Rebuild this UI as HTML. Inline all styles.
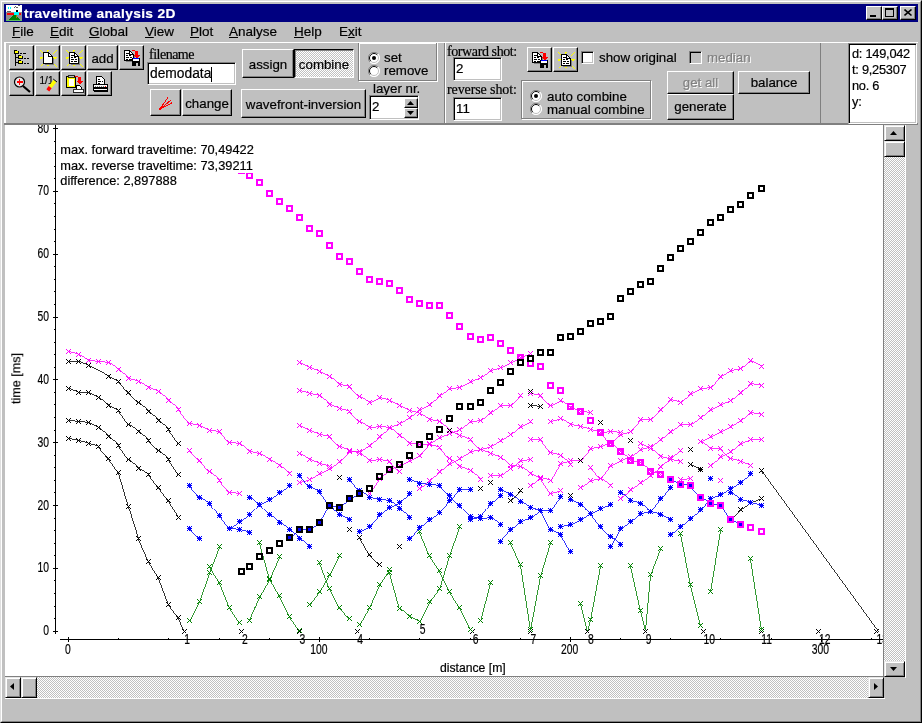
<!DOCTYPE html><html><head><meta charset="utf-8"><title>traveltime analysis 2D</title><style>
html,body{margin:0;padding:0}
body{width:922px;height:723px;overflow:hidden;background:#c0c0c0;position:relative;font-family:"Liberation Sans",sans-serif;font-size:13px;color:#000}
.a{position:absolute;box-sizing:border-box}
.t{position:absolute;white-space:nowrap;line-height:1}
.btn{position:absolute;box-sizing:border-box;background:#c0c0c0;border:1px solid;border-color:#fff #000 #000 #fff;box-shadow:inset -1px -1px 0 #808080}
.sbtn{position:absolute;box-sizing:border-box;background:#c0c0c0;border:1px solid;border-color:#e8e8e8 #000 #000 #e8e8e8;box-shadow:inset 1px 1px 0 #fff,inset -1px -1px 0 #808080}
.btn .t{left:0;right:0;text-align:center}
.sunk{position:absolute;box-sizing:border-box;background:#fff;border:1px solid;border-color:#808080 #fff #fff #808080;box-shadow:inset 1px 1px 0 #000,inset -1px -1px 0 #c0c0c0}
.grp{position:absolute;box-sizing:border-box;border:1px solid #808080;box-shadow:inset 1px 1px 0 #fff, 1px 1px 0 #fff}
.dith{background-image:conic-gradient(#fff 25%,#c0c0c0 0 50%,#fff 0 75%,#c0c0c0 0);background-size:2px 2px}
.ser{font-family:"Liberation Serif",serif}
u{text-decoration:underline}
.t,svg text{will-change:transform}
.t{-webkit-text-stroke:0.2px currentColor}
svg text{stroke:#000;stroke-width:0.2px}
svg{will-change:opacity}
</style></head><body>
<div class="a" style="left:0;top:0;width:922px;height:723px;border:1px solid;border-color:#dfdfdf #000 #000 #dfdfdf"></div>
<div class="a" style="left:1px;top:1px;width:920px;height:721px;border:1px solid;border-color:#fff #808080 #808080 #fff"></div>
<div class="a" style="left:4px;top:4px;width:914px;height:18px;background:#000080"></div>
<svg class="a" style="left:6px;top:5px" width="16" height="16" shape-rendering="crispEdges"><rect width="16" height="16" fill="#fff"/><rect x="0" y="7" width="16" height="9" fill="#909090"/><rect x="2" y="2" width="1" height="2" fill="#00ffff"/><rect x="4" y="2" width="1" height="2" fill="#00ffff"/><path d="M8 3l2-2M10 2l2 1M12 0h2M1 6h4" stroke="#606060" fill="none"/><rect x="10" y="5" width="2" height="2" fill="#000"/><rect x="1" y="8" width="7" height="2" fill="#ff0000"/><rect x="13" y="8" width="2" height="2" fill="#ff0000"/><rect x="8" y="7" width="5" height="3" fill="#00ffff"/><path d="M1.5 15.5L7.5 9.5L10 10L14.5 15.5Z" fill="#008000"/><rect x="10" y="10" width="1" height="3" fill="#a08000"/><rect x="0" y="15" width="16" height="1" fill="#60c060"/></svg>
<div class="t" style="left:24px;top:6.5px;font-size:13.7px;font-weight:bold;color:#fff;letter-spacing:0.36px">traveltime analysis 2D</div>
<div class="btn" style="left:866px;top:6px;width:16px;height:14px"></div>
<div class="btn" style="left:882px;top:6px;width:16px;height:14px"></div>
<div class="btn" style="left:900px;top:6px;width:16px;height:14px"></div>
<div class="a" style="left:870px;top:15px;width:6px;height:2px;background:#000"></div>
<div class="a" style="left:885px;top:8px;width:9px;height:9px;border:1px solid #000;border-top-width:2px"></div>
<svg class="a" style="left:904px;top:9px" width="9" height="9"><path d="M0.5 0.5 L7.5 6.5 M7.5 0.5 L0.5 6.5" stroke="#000" stroke-width="1.6"/></svg>
<div class="t" style="left:12px;top:25px;font-size:13.5px"><u>F</u>ile</div>
<div class="t" style="left:50px;top:25px;font-size:13.5px"><u>E</u>dit</div>
<div class="t" style="left:89px;top:25px;font-size:13.5px"><u>G</u>lobal</div>
<div class="t" style="left:145px;top:25px;font-size:13.5px"><u>V</u>iew</div>
<div class="t" style="left:190px;top:25px;font-size:13.5px"><u>P</u>lot</div>
<div class="t" style="left:229px;top:25px;font-size:13.5px"><u>A</u>nalyse</div>
<div class="t" style="left:294px;top:25px;font-size:13.5px"><u>H</u>elp</div>
<div class="t" style="left:339.4px;top:25px;font-size:13.5px">E<u>x</u>it</div>
<div class="a" style="left:4px;top:42px;width:914px;height:1px;background:#fff"></div>
<div class="a" style="left:4px;top:42px;width:2px;height:81px;background:#fff"></div>
<div class="a" style="left:4px;top:123px;width:914px;height:2px;background:#808080"></div>
<div class="a" style="left:444px;top:43px;width:1px;height:80px;background:#808080"></div><div class="a" style="left:445px;top:43px;width:1px;height:80px;background:#fff"></div>
<div class="a" style="left:820px;top:43px;width:1px;height:80px;background:#808080"></div>
<div class="btn" style="left:9px;top:45px;width:25px;height:25px;"><div class="a" style="left:-1px;top:-1px"><svg class="a" style="left:0;top:0" width="25" height="25" viewBox="0 0 25 25" shape-rendering="crispEdges"><rect x="6" y="9" width="1" height="12" fill="#000"/><rect x="5" y="6" width="5" height="3" fill="#000"/><rect x="5" y="5" width="3" height="1" fill="#000"/><rect x="6" y="6" width="3" height="2" fill="#ffff00"/><rect x="9" y="11" width="5" height="3" fill="#000"/><rect x="9" y="10" width="3" height="1" fill="#000"/><rect x="10" y="11" width="3" height="2" fill="#ffff00"/><rect x="9" y="16" width="5" height="3" fill="#000"/><rect x="9" y="15" width="3" height="1" fill="#000"/><rect x="10" y="16" width="3" height="2" fill="#ffff00"/><rect x="7" y="12" width="2" height="1" fill="#000"/><rect x="7" y="17" width="2" height="1" fill="#000"/><rect x="11" y="8" width="2" height="1" fill="#000"/><rect x="14" y="8" width="3" height="1" fill="#000"/><rect x="15" y="13" width="2" height="1" fill="#000"/><rect x="18" y="13" width="2" height="1" fill="#000"/><rect x="15" y="18" width="2" height="1" fill="#000"/><rect x="18" y="18" width="2" height="1" fill="#000"/></svg></div></div>
<div class="btn" style="left:35px;top:45px;width:25px;height:25px;"><div class="a" style="left:-1px;top:-1px"><svg class="a" style="left:0;top:0" width="25" height="25" viewBox="0 0 25 25" shape-rendering="crispEdges"><rect x="5" y="5" width="1" height="1" fill="#ffff00"/><rect x="6" y="6" width="1" height="1" fill="#ffff00"/><rect x="7" y="7" width="1" height="1" fill="#ffff00"/><rect x="21" y="5" width="1" height="1" fill="#ffff00"/><rect x="20" y="6" width="1" height="1" fill="#ffff00"/><rect x="19" y="7" width="1" height="1" fill="#ffff00"/><rect x="18" y="8" width="1" height="1" fill="#ffff00"/><rect x="18" y="18" width="1" height="1" fill="#ffff00"/><rect x="19" y="19" width="1" height="1" fill="#ffff00"/><rect x="20" y="20" width="1" height="1" fill="#ffff00"/><rect x="21" y="21" width="1" height="1" fill="#ffff00"/><rect x="8" y="18" width="1" height="1" fill="#ffff00"/><rect x="7" y="19" width="1" height="1" fill="#ffff00"/><rect x="6" y="20" width="1" height="1" fill="#ffff00"/><rect x="12" y="5" width="2" height="1" fill="#ffff00"/><rect x="12" y="6" width="1" height="1" fill="#ffff00"/><rect x="18" y="12" width="4" height="1" fill="#ffff00"/><rect x="19" y="13" width="2" height="1" fill="#ffff00"/><rect x="12" y="19" width="1" height="1" fill="#ffff00"/><rect x="12" y="20" width="2" height="1" fill="#ffff00"/><rect x="5" y="12" width="3" height="1" fill="#ffff00"/><rect x="5" y="13" width="2" height="1" fill="#ffff00"/><path d="M8.5 7.5H13.5L17.5 11.5V18.5H8.5Z" fill="#fff" stroke="#000"/><path d="M13.5 7.5V11.5H17.5" fill="none" stroke="#000"/><path d="M18.5 13V19.5H10" fill="none" stroke="#808080"/></svg></div></div>
<div class="btn" style="left:61px;top:45px;width:25px;height:25px;"><div class="a" style="left:-1px;top:-1px"><svg class="a" style="left:0;top:0" width="25" height="25" viewBox="0 0 25 25" shape-rendering="crispEdges"><rect x="5" y="5" width="1" height="1" fill="#ffff00"/><rect x="6" y="6" width="1" height="1" fill="#ffff00"/><rect x="7" y="7" width="1" height="1" fill="#ffff00"/><rect x="21" y="5" width="1" height="1" fill="#ffff00"/><rect x="20" y="6" width="1" height="1" fill="#ffff00"/><rect x="19" y="7" width="1" height="1" fill="#ffff00"/><rect x="18" y="8" width="1" height="1" fill="#ffff00"/><rect x="18" y="18" width="1" height="1" fill="#ffff00"/><rect x="19" y="19" width="1" height="1" fill="#ffff00"/><rect x="20" y="20" width="1" height="1" fill="#ffff00"/><rect x="21" y="21" width="1" height="1" fill="#ffff00"/><rect x="8" y="18" width="1" height="1" fill="#ffff00"/><rect x="7" y="19" width="1" height="1" fill="#ffff00"/><rect x="6" y="20" width="1" height="1" fill="#ffff00"/><rect x="12" y="5" width="2" height="1" fill="#ffff00"/><rect x="12" y="6" width="1" height="1" fill="#ffff00"/><rect x="18" y="12" width="4" height="1" fill="#ffff00"/><rect x="19" y="13" width="2" height="1" fill="#ffff00"/><rect x="12" y="19" width="1" height="1" fill="#ffff00"/><rect x="12" y="20" width="2" height="1" fill="#ffff00"/><rect x="5" y="12" width="3" height="1" fill="#ffff00"/><rect x="5" y="13" width="2" height="1" fill="#ffff00"/><path d="M8.5 7.5H13.5L17.5 11.5V18.5H8.5Z" fill="#fff" stroke="#000"/><path d="M13.5 7.5V11.5H17.5" fill="none" stroke="#000"/><path d="M18.5 13V19.5H10" fill="none" stroke="#808080"/><path d="M10 10.5h3M10 12.5h2M13 12.5h2M10 14.5h3M14 14.5h2M10 16.5h2M13 16.5h3" stroke="#000"/></svg></div></div>
<div class="btn" style="left:87px;top:45px;width:31px;height:25px;"><div class="t" style="left:0;right:0;text-align:center;top:6px;font-size:13.3px;color:#000;">add</div></div>
<div class="btn" style="left:119px;top:45px;width:25px;height:25px;"><div class="a" style="left:-1px;top:-1px"><svg class="a" style="left:0;top:0" width="25" height="25" viewBox="0 0 25 25" shape-rendering="crispEdges"><path d="M5.5 5.5H10.5L14.5 9.5V15.5H5.5Z" fill="#fff" stroke="#000"/><path d="M10.5 5.5V9.5H14.5" fill="none" stroke="#000"/><path d="M15.5 11V16.5H7" fill="none" stroke="#808080"/><path d="M7 8.5h3M7 10.5h2M10 10.5h2M7 12.5h3M11 12.5h2M7 14.5h2M10 14.5h3" stroke="#000"/><path d="M13 5.5h3M16 6.5h2" stroke="#ff0000" stroke-width="1.6"/><rect x="16" y="6" width="3" height="4" fill="#ff0000"/><path d="M14 10h7l-3.5 3.5z" fill="#ff0000"/><rect x="13" y="13" width="8" height="8" fill="#000"/><rect x="14" y="13" width="6" height="1" fill="#0000ff"/><rect x="14" y="14" width="6" height="2" fill="#fff"/><rect x="16" y="18" width="3" height="3" fill="#c0c0c0"/><rect x="16" y="18" width="1" height="3" fill="#000"/></svg></div></div>
<div class="btn" style="left:9px;top:71px;width:25px;height:25px;"><div class="a" style="left:-1px;top:-1px"><svg class="a" style="left:0;top:0" width="25" height="25" viewBox="0 0 25 25" shape-rendering="crispEdges"><path d="M14 15L21 21" stroke="#000" stroke-width="2.2" shape-rendering="auto"/><circle cx="10.5" cy="11" r="5" fill="#e8e8e8" stroke="#000" stroke-width="1.2" shape-rendering="auto"/><path d="M10.5 8v6M7.5 11h6" stroke="#ff0000" stroke-width="1.3"/></svg></div></div>
<div class="btn" style="left:35px;top:71px;width:25px;height:25px;"><div class="a" style="left:-1px;top:-1px"><svg class="a" style="left:0;top:0" width="25" height="25" viewBox="0 0 25 25" shape-rendering="crispEdges"><text x="4.5" y="12.5" font-family="'Liberation Sans', sans-serif" font-size="10.5" fill="#000" textLength="14" lengthAdjust="spacingAndGlyphs">1/1</text><path d="M15.2 16.2L20 9.8" stroke="#ffff00" stroke-width="3.6" shape-rendering="auto"/><path d="M12.8 19.4L15.2 16.2" stroke="#ff0000" stroke-width="3.6" shape-rendering="auto"/><path d="M18.2 8L22 11" stroke="#000" stroke-width="1" shape-rendering="auto"/></svg></div></div>
<div class="btn" style="left:61px;top:71px;width:25px;height:25px;"><div class="a" style="left:-1px;top:-1px"><svg class="a" style="left:0;top:0" width="25" height="25" viewBox="0 0 25 25" shape-rendering="crispEdges"><rect x="5.5" y="5.5" width="9" height="11" fill="#ffff00" stroke="#000"/><rect x="8" y="8" width="5" height="7" fill="#fff"/><rect x="7" y="4" width="6" height="2" fill="#c0c0c0" stroke="#000" stroke-width="0.8"/><path d="M14 5.5h3M17 6.5h2" stroke="#ff0000" stroke-width="1.6"/><rect x="17" y="6" width="3" height="4" fill="#ff0000"/><path d="M15 10h7l-3.5 3.5z" fill="#ff0000"/><path d="M15.5 14.5h3l2 2v3h-5z" fill="#fff" stroke="#000"/><rect x="12" y="18" width="10" height="3" fill="#fff" stroke="#000" stroke-width="0.8"/></svg></div></div>
<div class="btn" style="left:87px;top:71px;width:25px;height:25px;"><div class="a" style="left:-1px;top:-1px"><svg class="a" style="left:0;top:0" width="25" height="25" viewBox="0 0 25 25" shape-rendering="crispEdges"><path d="M9.5 5.5h5l3 3v5h-8z" fill="#fff" stroke="#000"/><path d="M11 8.5h2M11 10.5h3M15 10.5h1M11 12.5h2" stroke="#000"/><rect x="6.5" y="13.5" width="14" height="3" fill="#fff" stroke="#000"/><path d="M8 15.5h1M10 15.5h1M12 15.5h1M14 15.5h1M16 15.5h1" stroke="#808080"/><rect x="18" y="15" width="1" height="1" fill="#f00"/><rect x="6.5" y="17.5" width="14" height="2" fill="#fff" stroke="#000"/><path d="M7 20.5h14" stroke="#000"/></svg></div></div>
<div class="t ser" style="left:149px;top:47.5px;font-size:14px;letter-spacing:-0.5px">filename</div>
<div class="sunk" style="left:147px;top:62px;width:89px;height:23px"><div class="t" style="left:2px;top:4px;font-size:13.8px">demodata</div><div class="a" style="left:63px;top:4px;width:1px;height:15px;background:#000"></div></div>
<div class="btn" style="left:150px;top:89px;width:31px;height:27px;"><div class="a" style="left:-1px;top:-1px"><svg class="a" style="left:0;top:0" width="31" height="27" viewBox="0 0 31 27" shape-rendering="crispEdges"><path d="M9.5 20.5L18 8.5M9.5 20.5L21 11M9.5 20.5L22.5 13.5M9 19l3 1" stroke="#ff0000" stroke-width="1" fill="none"/></svg></div></div>
<div class="btn" style="left:182px;top:89px;width:50px;height:27px;"><div class="t" style="left:0;right:0;text-align:center;top:7px;font-size:13.3px;color:#000;">change</div></div>
<div class="btn" style="left:242px;top:49px;width:52px;height:29px;"><div class="t" style="left:0;right:0;text-align:center;top:8px;font-size:13.3px;color:#000;">assign</div></div>
<div class="a dith" style="left:294px;top:49px;width:60px;height:29px;border:1px solid;border-color:#000 #fff #fff #000;box-shadow:inset 1px 1px 0 #808080;"><div class="t" style="left:0;right:0;text-align:center;top:8px;font-size:13.3px;color:#000;">combine</div></div>
<div class="btn" style="left:241px;top:89px;width:125px;height:29px;"><div class="t" style="left:0;right:0;text-align:center;top:8px;font-size:13.3px;color:#000;">wavefront-inversion</div></div>
<div class="grp" style="left:358px;top:42px;width:79px;height:39px"></div>
<svg class="a" style="left:368px;top:52px" width="12" height="12"><circle cx="6" cy="6" r="5.5" fill="#fff"/><path d="M10 2 A5.5 5.5 0 0 0 2 10" fill="none" stroke="#808080" stroke-width="1"/><path d="M2 10 A5.5 5.5 0 0 0 10 2" fill="none" stroke="#fff" stroke-width="1"/><path d="M9.2 2.8 A4.5 4.5 0 0 0 2.8 9.2" fill="none" stroke="#000" stroke-width="1"/><path d="M2.8 9.2 A4.5 4.5 0 0 0 9.2 2.8" fill="none" stroke="#c0c0c0" stroke-width="1"/><circle cx="6" cy="6" r="2" fill="#000"/></svg>
<svg class="a" style="left:368px;top:65px" width="12" height="12"><circle cx="6" cy="6" r="5.5" fill="#fff"/><path d="M10 2 A5.5 5.5 0 0 0 2 10" fill="none" stroke="#808080" stroke-width="1"/><path d="M2 10 A5.5 5.5 0 0 0 10 2" fill="none" stroke="#fff" stroke-width="1"/><path d="M9.2 2.8 A4.5 4.5 0 0 0 2.8 9.2" fill="none" stroke="#000" stroke-width="1"/><path d="M2.8 9.2 A4.5 4.5 0 0 0 9.2 2.8" fill="none" stroke="#c0c0c0" stroke-width="1"/></svg>
<div class="t" style="left:384px;top:51px;font-size:13.3px">set</div>
<div class="t" style="left:384px;top:64px;font-size:13.3px">remove</div>
<div class="t" style="left:373px;top:82px;font-size:13.3px">layer nr.</div>
<div class="sunk" style="left:369px;top:95px;width:50px;height:25px"><div class="t" style="left:2px;top:4px;font-size:13.3px">2</div></div>
<div class="btn" style="left:404px;top:98px;width:14px;height:10px;"></div>
<div class="btn" style="left:404px;top:108px;width:14px;height:10px;"></div>
<svg class="a" style="left:407px;top:101px" width="7" height="4"><path d="M0 4 L3.5 0 L7 4Z" fill="#000"/></svg>
<svg class="a" style="left:407px;top:111px" width="7" height="4"><path d="M0 0 L3.5 4 L7 0Z" fill="#000"/></svg>
<div class="t ser" style="left:447px;top:44.5px;font-size:14px;letter-spacing:-0.4px">forward shot:</div>
<div class="sunk" style="left:453px;top:57px;width:49px;height:24px"><div class="t" style="left:2px;top:4px;font-size:13.3px">2</div></div>
<div class="t ser" style="left:447px;top:82.5px;font-size:14px;letter-spacing:-0.1px">reverse shot:</div>
<div class="sunk" style="left:453px;top:97px;width:49px;height:24px"><div class="t" style="left:2px;top:4px;font-size:13.3px">11</div></div>
<div class="btn" style="left:527px;top:47px;width:25px;height:25px;"><div class="a" style="left:-1px;top:-1px"><svg class="a" style="left:0;top:0" width="25" height="25" viewBox="0 0 25 25" shape-rendering="crispEdges"><path d="M5.5 5.5H10.5L14.5 9.5V15.5H5.5Z" fill="#fff" stroke="#000"/><path d="M10.5 5.5V9.5H14.5" fill="none" stroke="#000"/><path d="M15.5 11V16.5H7" fill="none" stroke="#808080"/><path d="M7 8.5h3M7 10.5h2M10 10.5h2M7 12.5h3M11 12.5h2M7 14.5h2M10 14.5h3" stroke="#000"/><path d="M13 5.5h3M16 6.5h2" stroke="#ff0000" stroke-width="1.6"/><rect x="16" y="6" width="3" height="4" fill="#ff0000"/><path d="M14 10h7l-3.5 3.5z" fill="#ff0000"/><rect x="13" y="13" width="8" height="8" fill="#000"/><rect x="14" y="13" width="6" height="1" fill="#0000ff"/><rect x="14" y="14" width="6" height="2" fill="#fff"/><rect x="16" y="18" width="3" height="3" fill="#c0c0c0"/><rect x="16" y="18" width="1" height="3" fill="#000"/></svg></div></div>
<div class="btn" style="left:553px;top:47px;width:25px;height:25px;"><div class="a" style="left:-1px;top:-1px"><svg class="a" style="left:0;top:0" width="25" height="25" viewBox="0 0 25 25" shape-rendering="crispEdges"><rect x="5" y="5" width="1" height="1" fill="#ffff00"/><rect x="6" y="6" width="1" height="1" fill="#ffff00"/><rect x="7" y="7" width="1" height="1" fill="#ffff00"/><rect x="21" y="5" width="1" height="1" fill="#ffff00"/><rect x="20" y="6" width="1" height="1" fill="#ffff00"/><rect x="19" y="7" width="1" height="1" fill="#ffff00"/><rect x="18" y="8" width="1" height="1" fill="#ffff00"/><rect x="18" y="18" width="1" height="1" fill="#ffff00"/><rect x="19" y="19" width="1" height="1" fill="#ffff00"/><rect x="20" y="20" width="1" height="1" fill="#ffff00"/><rect x="21" y="21" width="1" height="1" fill="#ffff00"/><rect x="8" y="18" width="1" height="1" fill="#ffff00"/><rect x="7" y="19" width="1" height="1" fill="#ffff00"/><rect x="6" y="20" width="1" height="1" fill="#ffff00"/><rect x="12" y="5" width="2" height="1" fill="#ffff00"/><rect x="12" y="6" width="1" height="1" fill="#ffff00"/><rect x="18" y="12" width="4" height="1" fill="#ffff00"/><rect x="19" y="13" width="2" height="1" fill="#ffff00"/><rect x="12" y="19" width="1" height="1" fill="#ffff00"/><rect x="12" y="20" width="2" height="1" fill="#ffff00"/><rect x="5" y="12" width="3" height="1" fill="#ffff00"/><rect x="5" y="13" width="2" height="1" fill="#ffff00"/><path d="M8.5 7.5H13.5L17.5 11.5V18.5H8.5Z" fill="#fff" stroke="#000"/><path d="M13.5 7.5V11.5H17.5" fill="none" stroke="#000"/><path d="M18.5 13V19.5H10" fill="none" stroke="#808080"/><path d="M10 10.5h3M10 12.5h2M13 12.5h2M10 14.5h3M14 14.5h2M10 16.5h2M13 16.5h3" stroke="#000"/></svg></div></div>
<div class="sunk" style="left:581px;top:51px;width:13px;height:13px"></div>
<div class="t" style="left:599px;top:51px;font-size:13.3px">show original</div>
<div class="sunk" style="left:689px;top:51px;width:13px;height:13px;background:#c0c0c0"></div>
<div class="t" style="left:707px;top:51px;font-size:13.3px;color:#808080;text-shadow:1px 1px 0 #fff">median</div>
<div class="grp" style="left:521px;top:80px;width:130px;height:39px"></div>
<svg class="a" style="left:530px;top:90px" width="12" height="12"><circle cx="6" cy="6" r="5.5" fill="#fff"/><path d="M10 2 A5.5 5.5 0 0 0 2 10" fill="none" stroke="#808080" stroke-width="1"/><path d="M2 10 A5.5 5.5 0 0 0 10 2" fill="none" stroke="#fff" stroke-width="1"/><path d="M9.2 2.8 A4.5 4.5 0 0 0 2.8 9.2" fill="none" stroke="#000" stroke-width="1"/><path d="M2.8 9.2 A4.5 4.5 0 0 0 9.2 2.8" fill="none" stroke="#c0c0c0" stroke-width="1"/><circle cx="6" cy="6" r="2" fill="#000"/></svg>
<svg class="a" style="left:530px;top:103px" width="12" height="12"><circle cx="6" cy="6" r="5.5" fill="#fff"/><path d="M10 2 A5.5 5.5 0 0 0 2 10" fill="none" stroke="#808080" stroke-width="1"/><path d="M2 10 A5.5 5.5 0 0 0 10 2" fill="none" stroke="#fff" stroke-width="1"/><path d="M9.2 2.8 A4.5 4.5 0 0 0 2.8 9.2" fill="none" stroke="#000" stroke-width="1"/><path d="M2.8 9.2 A4.5 4.5 0 0 0 9.2 2.8" fill="none" stroke="#c0c0c0" stroke-width="1"/></svg>
<div class="t" style="left:547px;top:90px;font-size:13.3px">auto combine</div>
<div class="t" style="left:547px;top:103px;font-size:13.3px">manual combine</div>
<div class="btn" style="left:667px;top:71px;width:67px;height:23px;"><div class="t" style="left:0;right:0;text-align:center;top:4px;font-size:13.3px;color:#808080;text-shadow:1px 1px 0 #fff;">get all</div></div>
<div class="btn" style="left:738px;top:71px;width:72px;height:23px;"><div class="t" style="left:0;right:0;text-align:center;top:4px;font-size:13.3px;color:#000;">balance</div></div>
<div class="btn" style="left:667px;top:94px;width:67px;height:26px;"><div class="t" style="left:0;right:0;text-align:center;top:5px;font-size:13.3px;color:#000;">generate</div></div>
<div class="sunk" style="left:848px;top:43px;width:69px;height:81px;border-color:#808080 #fff #fff #808080"><div class="t" style="left:3px;top:2px;font-size:12.8px;letter-spacing:-0.25px;line-height:16px">d: 149,042<br>t: 9,25307<br>no. 6<br>y:</div></div>
<div class="a" style="left:4px;top:42px;width:914px;height:1px;background:#fff"></div>
<div class="a" style="left:5px;top:125px;width:879px;height:552px;background:#808080"></div><div class="a" style="left:5px;top:125px;width:878px;height:551px;background:#fff"></div>
<div class="a dith" style="left:884px;top:125px;width:21px;height:552px"></div>
<div class="sbtn" style="left:884px;top:125px;width:21px;height:16px"></div>
<div class="sbtn" style="left:884px;top:141px;width:21px;height:16px"></div>
<div class="sbtn" style="left:884px;top:661px;width:21px;height:16px"></div>
<svg class="a" style="left:890px;top:131px" width="7" height="4"><path d="M0 4 L3.5 0 L7 4Z" fill="#000"/></svg>
<svg class="a" style="left:890px;top:667px" width="7" height="4"><path d="M0 0 L3.5 4 L7 0Z" fill="#000"/></svg>
<div class="a dith" style="left:5px;top:677px;width:879px;height:21px"></div>
<div class="sbtn" style="left:5px;top:677px;width:16px;height:21px"></div>
<div class="sbtn" style="left:21px;top:677px;width:16px;height:21px"></div>
<div class="sbtn" style="left:868px;top:677px;width:16px;height:21px"></div>
<svg class="a" style="left:10px;top:683px" width="4" height="7"><path d="M4 0 L0 3.5 L4 7Z" fill="#000"/></svg>
<svg class="a" style="left:874px;top:683px" width="4" height="7"><path d="M0 0 L4 3.5 L0 7Z" fill="#000"/></svg>
<div class="a" style="left:905px;top:125px;width:1px;height:553px;background:#fff"></div><div class="a" style="left:5px;top:698px;width:880px;height:1px;background:#fff"></div>
<svg class="a" style="left:0;top:0" width="922" height="723" viewBox="0 0 922 723"><defs><clipPath id="cc"><rect x="5" y="125" width="878" height="551"/></clipPath></defs>
<g clip-path="url(#cc)" shape-rendering="crispEdges" stroke-width="1" fill="none">
<path d="M182 629L187 634M182 634L187 629" stroke="#000"/>
<path d="M239 629L244 634M239 634L244 629" stroke="#000"/>
<path d="M297 629L302 634M297 634L302 629" stroke="#000"/>
<path d="M355 629L360 634M355 634L360 629" stroke="#000"/>
<path d="M470 629L475 634M470 634L475 629" stroke="#000"/>
<path d="M528 629L533 634M528 634L533 629" stroke="#000"/>
<path d="M585 629L590 634M585 634L590 629" stroke="#000"/>
<path d="M643 629L648 634M643 634L648 629" stroke="#000"/>
<path d="M701 629L706 634M701 634L706 629" stroke="#000"/>
<path d="M759 629L764 634M759 634L764 629" stroke="#000"/>
<path d="M816 629L821 634M816 634L821 629" stroke="#000"/>
<path d="M874 629L879 634M874 634L879 629" stroke="#000"/>
<polyline points="189.5,620.5 199.5,601.5 209.5,572.5 219.5,546.5" fill="none" stroke="#008000" stroke-width="0.8"/>
<path d="M187 618L192 623M187 623L192 618" stroke="#008000"/>
<path d="M197 599L202 604M197 604L202 599" stroke="#008000"/>
<path d="M207 570L212 575M207 575L212 570" stroke="#008000"/>
<path d="M217 544L222 549M217 549L222 544" stroke="#008000"/>
<polyline points="209.5,566.5 219.5,582.5 229.5,607.5 239.5,622.5" fill="none" stroke="#008000" stroke-width="0.8"/>
<path d="M207 564L212 569M207 569L212 564" stroke="#008000"/>
<path d="M217 580L222 585M217 585L222 580" stroke="#008000"/>
<path d="M227 605L232 610M227 610L232 605" stroke="#008000"/>
<path d="M237 620L242 625M237 625L242 620" stroke="#008000"/>
<polyline points="249.5,620.5 259.5,596.5 269.5,579.5 279.5,556.5" fill="none" stroke="#008000" stroke-width="0.8"/>
<path d="M247 618L252 623M247 623L252 618" stroke="#008000"/>
<path d="M257 594L262 599M257 599L262 594" stroke="#008000"/>
<path d="M267 577L272 582M267 582L272 577" stroke="#008000"/>
<path d="M277 554L282 559M277 559L282 554" stroke="#008000"/>
<polyline points="259.5,542.5 269.5,578.5 279.5,595.5 289.5,616.5 299.5,630.5" fill="none" stroke="#008000" stroke-width="0.8"/>
<path d="M257 540L262 545M257 545L262 540" stroke="#008000"/>
<path d="M267 576L272 581M267 581L272 576" stroke="#008000"/>
<path d="M277 593L282 598M277 598L282 593" stroke="#008000"/>
<path d="M287 614L292 619M287 619L292 614" stroke="#008000"/>
<path d="M297 628L302 633M297 633L302 628" stroke="#008000"/>
<polyline points="309.5,604.5 319.5,591.5 329.5,574.5 339.5,555.5" fill="none" stroke="#008000" stroke-width="0.8"/>
<path d="M307 602L312 607M307 607L312 602" stroke="#008000"/>
<path d="M317 589L322 594M317 594L322 589" stroke="#008000"/>
<path d="M327 572L332 577M327 577L332 572" stroke="#008000"/>
<path d="M337 553L342 558M337 558L342 553" stroke="#008000"/>
<polyline points="319.5,562.5 329.5,588.5 339.5,607.5 349.5,618.5" fill="none" stroke="#008000" stroke-width="0.8"/>
<path d="M317 560L322 565M317 565L322 560" stroke="#008000"/>
<path d="M327 586L332 591M327 591L332 586" stroke="#008000"/>
<path d="M337 605L342 610M337 610L342 605" stroke="#008000"/>
<path d="M347 616L352 621M347 621L352 616" stroke="#008000"/>
<polyline points="359.5,624.5 369.5,607.5 379.5,584.5 389.5,569.5" fill="none" stroke="#008000" stroke-width="0.8"/>
<path d="M357 622L362 627M357 627L362 622" stroke="#008000"/>
<path d="M367 605L372 610M367 610L372 605" stroke="#008000"/>
<path d="M377 582L382 587M377 587L382 582" stroke="#008000"/>
<path d="M387 567L392 572M387 572L392 567" stroke="#008000"/>
<polyline points="389.5,572.5 399.5,608.5 409.5,616.5 419.5,621.5" fill="none" stroke="#008000" stroke-width="0.8"/>
<path d="M387 570L392 575M387 575L392 570" stroke="#008000"/>
<path d="M397 606L402 611M397 611L402 606" stroke="#008000"/>
<path d="M407 614L412 619M407 619L412 614" stroke="#008000"/>
<path d="M417 619L422 624M417 624L422 619" stroke="#008000"/>
<polyline points="419.5,621.5 429.5,601.5 439.5,588.5 449.5,555.5 459.5,526.5" fill="none" stroke="#008000" stroke-width="0.8"/>
<path d="M417 619L422 624M417 624L422 619" stroke="#008000"/>
<path d="M427 599L432 604M427 604L432 599" stroke="#008000"/>
<path d="M437 586L442 591M437 591L442 586" stroke="#008000"/>
<path d="M447 553L452 558M447 558L452 553" stroke="#008000"/>
<path d="M457 524L462 529M457 529L462 524" stroke="#008000"/>
<polyline points="419.5,531.5 429.5,555.5 439.5,570.5 449.5,591.5 459.5,607.5 470.5,629.5" fill="none" stroke="#008000" stroke-width="0.8"/>
<path d="M417 529L422 534M417 534L422 529" stroke="#008000"/>
<path d="M427 553L432 558M427 558L432 553" stroke="#008000"/>
<path d="M437 568L442 573M437 573L442 568" stroke="#008000"/>
<path d="M447 589L452 594M447 594L452 589" stroke="#008000"/>
<path d="M457 605L462 610M457 610L462 605" stroke="#008000"/>
<path d="M468 627L473 632M468 632L473 627" stroke="#008000"/>
<polyline points="480.5,620.5 490.5,582.5" fill="none" stroke="#008000" stroke-width="0.8"/>
<path d="M478 618L483 623M478 623L483 618" stroke="#008000"/>
<path d="M488 580L493 585M488 585L493 580" stroke="#008000"/>
<polyline points="510.5,542.5 520.5,564.5 530.5,629.5" fill="none" stroke="#008000" stroke-width="0.8"/>
<path d="M508 540L513 545M508 545L513 540" stroke="#008000"/>
<path d="M518 562L523 567M518 567L523 562" stroke="#008000"/>
<path d="M528 627L533 632M528 632L533 627" stroke="#008000"/>
<polyline points="530.5,629.5 540.5,575.5 550.5,542.5" fill="none" stroke="#008000" stroke-width="0.8"/>
<path d="M528 627L533 632M528 632L533 627" stroke="#008000"/>
<path d="M538 573L543 578M538 578L543 573" stroke="#008000"/>
<path d="M548 540L553 545M548 545L553 540" stroke="#008000"/>
<polyline points="580.5,603.5 587.5,630.5" fill="none" stroke="#008000" stroke-width="0.8"/>
<path d="M578 601L583 606M578 606L583 601" stroke="#008000"/>
<polyline points="587.5,630.5 590.5,619.5 600.5,565.5" fill="none" stroke="#008000" stroke-width="0.8"/>
<path d="M588 617L593 622M588 622L593 617" stroke="#008000"/>
<path d="M598 563L603 568M598 568L603 563" stroke="#008000"/>
<polyline points="630.5,565.5 640.5,610.5 645.5,629.5" fill="none" stroke="#008000" stroke-width="0.8"/>
<path d="M628 563L633 568M628 568L633 563" stroke="#008000"/>
<path d="M638 608L643 613M638 613L643 608" stroke="#008000"/>
<polyline points="645.5,629.5 650.5,574.5 660.5,548.5" fill="none" stroke="#008000" stroke-width="0.8"/>
<path d="M648 572L653 577M648 577L653 572" stroke="#008000"/>
<path d="M658 546L663 551M658 551L663 546" stroke="#008000"/>
<polyline points="680.5,533.5 690.5,584.5 700.5,625.5" fill="none" stroke="#008000" stroke-width="0.8"/>
<path d="M678 531L683 536M678 536L683 531" stroke="#008000"/>
<path d="M688 582L693 587M688 587L693 582" stroke="#008000"/>
<path d="M698 623L703 628M698 628L703 623" stroke="#008000"/>
<polyline points="710.5,591.5 720.5,529.5" fill="none" stroke="#008000" stroke-width="0.8"/>
<path d="M708 589L713 594M708 594L713 589" stroke="#008000"/>
<path d="M718 527L723 532M718 532L723 527" stroke="#008000"/>
<polyline points="750.5,558.5 761.5,629.5" fill="none" stroke="#008000" stroke-width="0.8"/>
<path d="M748 556L753 561M748 561L753 556" stroke="#008000"/>
<path d="M759 627L764 632M759 632L764 627" stroke="#008000"/>
<polyline points="68.5,361.5 78.5,361.5 88.5,365.5 98.5,370.5 108.5,376.5 118.5,381.5 128.5,392.5 138.5,402.5 148.5,411.5 158.5,420.5 168.5,429.5 178.5,443.5" fill="none" stroke="#000" stroke-width="0.8"/>
<path d="M66 359L71 364M66 364L71 359" stroke="#000"/>
<path d="M76 359L81 364M76 364L81 359" stroke="#000"/>
<path d="M86 363L91 368M86 368L91 363" stroke="#000"/>
<path d="M106 374L111 379M106 379L111 374" stroke="#000"/>
<path d="M116 379L121 384M116 384L121 379" stroke="#000"/>
<path d="M126 390L131 395M126 395L131 390" stroke="#000"/>
<path d="M136 400L141 405M136 405L141 400" stroke="#000"/>
<path d="M146 409L151 414M146 414L151 409" stroke="#000"/>
<path d="M156 418L161 423M156 423L161 418" stroke="#000"/>
<path d="M166 427L171 432M166 432L171 427" stroke="#000"/>
<path d="M176 441L181 446M176 446L181 441" stroke="#000"/>
<polyline points="68.5,388.5 78.5,392.5 88.5,392.5 98.5,397.5 108.5,405.5 118.5,410.5 128.5,424.5 138.5,431.5 148.5,440.5 158.5,450.5 168.5,459.5 178.5,474.5" fill="none" stroke="#000" stroke-width="0.8"/>
<path d="M66 386L71 391M66 391L71 386" stroke="#000"/>
<path d="M76 390L81 395M76 395L81 390" stroke="#000"/>
<path d="M86 390L91 395M86 395L91 390" stroke="#000"/>
<path d="M96 395L101 400M96 400L101 395" stroke="#000"/>
<path d="M106 403L111 408M106 408L111 403" stroke="#000"/>
<path d="M116 408L121 413M116 413L121 408" stroke="#000"/>
<path d="M126 422L131 427M126 427L131 422" stroke="#000"/>
<path d="M136 429L141 434M136 434L141 429" stroke="#000"/>
<path d="M146 438L151 443M146 443L151 438" stroke="#000"/>
<path d="M156 448L161 453M156 453L161 448" stroke="#000"/>
<path d="M166 457L171 462M166 462L171 457" stroke="#000"/>
<path d="M176 472L181 477M176 477L181 472" stroke="#000"/>
<polyline points="68.5,420.5 78.5,421.5 88.5,422.5 98.5,427.5 108.5,436.5 118.5,445.5 128.5,459.5 138.5,468.5 148.5,474.5 158.5,487.5 168.5,500.5 178.5,517.5" fill="none" stroke="#000" stroke-width="0.8"/>
<path d="M66 418L71 423M66 423L71 418" stroke="#000"/>
<path d="M76 419L81 424M76 424L81 419" stroke="#000"/>
<path d="M86 420L91 425M86 425L91 420" stroke="#000"/>
<path d="M96 425L101 430M96 430L101 425" stroke="#000"/>
<path d="M106 434L111 439M106 439L111 434" stroke="#000"/>
<path d="M116 443L121 448M116 448L121 443" stroke="#000"/>
<path d="M126 457L131 462M126 462L131 457" stroke="#000"/>
<path d="M136 466L141 471M136 471L141 466" stroke="#000"/>
<path d="M146 472L151 477M146 477L151 472" stroke="#000"/>
<path d="M156 485L161 490M156 490L161 485" stroke="#000"/>
<path d="M166 498L171 503M166 503L171 498" stroke="#000"/>
<path d="M176 515L181 520M176 520L181 515" stroke="#000"/>
<polyline points="68.5,438.5 78.5,440.5 88.5,443.5 98.5,446.5 108.5,458.5 118.5,472.5 128.5,506.5 138.5,538.5 148.5,561.5 158.5,577.5 168.5,604.5 178.5,617.5 183.5,629.5" fill="none" stroke="#000" stroke-width="0.8"/>
<path d="M66 436L71 441M66 441L71 436" stroke="#000"/>
<path d="M76 438L81 443M76 443L81 438" stroke="#000"/>
<path d="M86 441L91 446M86 446L91 441" stroke="#000"/>
<path d="M96 444L101 449M96 449L101 444" stroke="#000"/>
<path d="M106 456L111 461M106 461L111 456" stroke="#000"/>
<path d="M116 470L121 475M116 475L121 470" stroke="#000"/>
<path d="M126 504L131 509M126 509L131 504" stroke="#000"/>
<path d="M136 536L141 541M136 541L141 536" stroke="#000"/>
<path d="M146 559L151 564M146 564L151 559" stroke="#000"/>
<path d="M156 575L161 580M156 580L161 575" stroke="#000"/>
<path d="M166 602L171 607M166 607L171 602" stroke="#000"/>
<path d="M176 615L181 620M176 620L181 615" stroke="#000"/>
<polyline points="359.5,537.5 369.5,554.5 379.5,564.5" fill="none" stroke="#000" stroke-width="0.8"/>
<path d="M357 535L362 540M357 540L362 535" stroke="#000"/>
<path d="M367 552L372 557M367 557L372 552" stroke="#000"/>
<path d="M377 562L382 567M377 567L382 562" stroke="#000"/>
<polyline points="510.5,500.5 520.5,490.5" fill="none" stroke="#000" stroke-width="0.8"/>
<path d="M508 498L513 503M508 503L513 498" stroke="#000"/>
<path d="M518 488L523 493M518 493L523 488" stroke="#000"/>
<polyline points="530.5,405.5 540.5,406.5" fill="none" stroke="#000" stroke-width="0.8"/>
<path d="M528 403L533 408M528 408L533 403" stroke="#000"/>
<path d="M538 404L543 409M538 409L543 404" stroke="#000"/>
<polyline points="690.5,464.5 700.5,469.5" fill="none" stroke="#000" stroke-width="0.8"/>
<path d="M688 462L693 467M688 467L693 462" stroke="#000"/>
<path d="M698 467L703 472M698 472L703 467" stroke="#000"/>
<path d="M698 467L703 472M698 472L703 467M698 469.5H703M700.5 467V472" stroke="#000"/><rect x="699" y="468" width="3" height="3" fill="#000"/>
<polyline points="730.5,519.5 740.5,509.5 750.5,502.5 761.5,498.5" fill="none" stroke="#000" stroke-width="0.8"/>
<path d="M728 517L733 522M728 522L733 517" stroke="#000"/>
<path d="M738 507L743 512M738 512L743 507" stroke="#000"/>
<path d="M748 500L753 505M748 505L753 500" stroke="#000"/>
<path d="M759 496L764 501M759 501L764 496" stroke="#000"/>
<polyline points="761.5,470.5 878.5,631.5" fill="none" stroke="#000" stroke-width="0.8"/>
<polyline points="68.5,351.5 78.5,354.5 88.5,360.5 98.5,361.5 108.5,362.5 118.5,369.5 128.5,378.5 138.5,381.5 148.5,387.5 158.5,391.5 168.5,400.5 178.5,409.5 189.5,423.5 199.5,425.5 209.5,430.5 219.5,431.5 229.5,442.5 239.5,443.5 249.5,451.5 259.5,453.5 269.5,459.5 279.5,465.5 289.5,473.5" fill="none" stroke="#ff00ff" stroke-width="0.8"/>
<path d="M66 349L71 354M66 354L71 349" stroke="#ff00ff"/>
<path d="M76 352L81 357M76 357L81 352" stroke="#ff00ff"/>
<path d="M86 358L91 363M86 363L91 358" stroke="#ff00ff"/>
<path d="M96 359L101 364M96 364L101 359" stroke="#ff00ff"/>
<path d="M106 360L111 365M106 365L111 360" stroke="#ff00ff"/>
<path d="M116 367L121 372M116 372L121 367" stroke="#ff00ff"/>
<path d="M126 376L131 381M126 381L131 376" stroke="#ff00ff"/>
<path d="M136 379L141 384M136 384L141 379" stroke="#ff00ff"/>
<path d="M146 385L151 390M146 390L151 385" stroke="#ff00ff"/>
<path d="M156 389L161 394M156 394L161 389" stroke="#ff00ff"/>
<path d="M166 398L171 403M166 403L171 398" stroke="#ff00ff"/>
<path d="M176 407L181 412M176 412L181 407" stroke="#ff00ff"/>
<path d="M187 421L192 426M187 426L192 421" stroke="#ff00ff"/>
<path d="M197 423L202 428M197 428L202 423" stroke="#ff00ff"/>
<path d="M207 428L212 433M207 433L212 428" stroke="#ff00ff"/>
<path d="M217 429L222 434M217 434L222 429" stroke="#ff00ff"/>
<path d="M227 440L232 445M227 445L232 440" stroke="#ff00ff"/>
<path d="M237 441L242 446M237 446L242 441" stroke="#ff00ff"/>
<path d="M247 449L252 454M247 454L252 449" stroke="#ff00ff"/>
<path d="M257 451L262 456M257 456L262 451" stroke="#ff00ff"/>
<path d="M267 457L272 462M267 462L272 457" stroke="#ff00ff"/>
<path d="M277 463L282 468M277 468L282 463" stroke="#ff00ff"/>
<path d="M287 471L292 476M287 476L292 471" stroke="#ff00ff"/>
<polyline points="189.5,450.5 199.5,460.5 209.5,471.5 219.5,480.5 229.5,492.5 239.5,493.5" fill="none" stroke="#ff00ff" stroke-width="0.8"/>
<path d="M187 448L192 453M187 453L192 448" stroke="#ff00ff"/>
<path d="M197 458L202 463M197 463L202 458" stroke="#ff00ff"/>
<path d="M207 469L212 474M207 474L212 469" stroke="#ff00ff"/>
<path d="M217 478L222 483M217 483L222 478" stroke="#ff00ff"/>
<path d="M227 490L232 495M227 495L232 490" stroke="#ff00ff"/>
<path d="M237 491L242 496M237 496L242 491" stroke="#ff00ff"/>
<polyline points="299.5,362.5 309.5,367.5 319.5,371.5 329.5,376.5 339.5,384.5 349.5,386.5 359.5,396.5 369.5,402.5 379.5,397.5 389.5,400.5 399.5,405.5 409.5,410.5 419.5,413.5 429.5,419.5 439.5,421.5 449.5,430.5 459.5,435.5 470.5,439.5 480.5,449.5 490.5,453.5 500.5,457.5 510.5,465.5 520.5,466.5 530.5,473.5 540.5,478.5 550.5,493.5 560.5,490.5" fill="none" stroke="#ff00ff" stroke-width="0.8"/>
<path d="M297 360L302 365M297 365L302 360" stroke="#ff00ff"/>
<path d="M307 365L312 370M307 370L312 365" stroke="#ff00ff"/>
<path d="M317 369L322 374M317 374L322 369" stroke="#ff00ff"/>
<path d="M327 374L332 379M327 379L332 374" stroke="#ff00ff"/>
<path d="M337 382L342 387M337 387L342 382" stroke="#ff00ff"/>
<path d="M347 384L352 389M347 389L352 384" stroke="#ff00ff"/>
<path d="M357 394L362 399M357 399L362 394" stroke="#ff00ff"/>
<path d="M367 400L372 405M367 405L372 400" stroke="#ff00ff"/>
<path d="M377 395L382 400M377 400L382 395" stroke="#ff00ff"/>
<path d="M387 398L392 403M387 403L392 398" stroke="#ff00ff"/>
<path d="M397 403L402 408M397 408L402 403" stroke="#ff00ff"/>
<path d="M407 408L412 413M407 413L412 408" stroke="#ff00ff"/>
<path d="M417 411L422 416M417 416L422 411" stroke="#ff00ff"/>
<path d="M427 417L432 422M427 422L432 417" stroke="#ff00ff"/>
<path d="M437 419L442 424M437 424L442 419" stroke="#ff00ff"/>
<path d="M447 428L452 433M447 433L452 428" stroke="#ff00ff"/>
<path d="M457 433L462 438M457 438L462 433" stroke="#ff00ff"/>
<path d="M468 437L473 442M468 442L473 437" stroke="#ff00ff"/>
<path d="M478 447L483 452M478 452L483 447" stroke="#ff00ff"/>
<path d="M488 451L493 456M488 456L493 451" stroke="#ff00ff"/>
<path d="M498 455L503 460M498 460L503 455" stroke="#ff00ff"/>
<path d="M508 463L513 468M508 468L513 463" stroke="#ff00ff"/>
<path d="M518 464L523 469M518 469L523 464" stroke="#ff00ff"/>
<path d="M528 471L533 476M528 476L533 471" stroke="#ff00ff"/>
<path d="M538 476L543 481M538 481L543 476" stroke="#ff00ff"/>
<path d="M548 491L553 496M548 496L553 491" stroke="#ff00ff"/>
<path d="M558 488L563 493M558 493L563 488" stroke="#ff00ff"/>
<polyline points="299.5,390.5 309.5,393.5 319.5,395.5 329.5,404.5 339.5,408.5 349.5,411.5 359.5,421.5 369.5,427.5 379.5,426.5 389.5,427.5 399.5,435.5 409.5,443.5 419.5,444.5 429.5,444.5 439.5,447.5 449.5,458.5 459.5,466.5 470.5,470.5 480.5,479.5" fill="none" stroke="#ff00ff" stroke-width="0.8"/>
<path d="M297 388L302 393M297 393L302 388" stroke="#ff00ff"/>
<path d="M307 391L312 396M307 396L312 391" stroke="#ff00ff"/>
<path d="M317 393L322 398M317 398L322 393" stroke="#ff00ff"/>
<path d="M327 402L332 407M327 407L332 402" stroke="#ff00ff"/>
<path d="M337 406L342 411M337 411L342 406" stroke="#ff00ff"/>
<path d="M347 409L352 414M347 414L352 409" stroke="#ff00ff"/>
<path d="M357 419L362 424M357 424L362 419" stroke="#ff00ff"/>
<path d="M367 425L372 430M367 430L372 425" stroke="#ff00ff"/>
<path d="M377 424L382 429M377 429L382 424" stroke="#ff00ff"/>
<path d="M387 425L392 430M387 430L392 425" stroke="#ff00ff"/>
<path d="M397 433L402 438M397 438L402 433" stroke="#ff00ff"/>
<path d="M407 441L412 446M407 446L412 441" stroke="#ff00ff"/>
<path d="M417 442L422 447M417 447L422 442" stroke="#ff00ff"/>
<path d="M427 442L432 447M427 447L432 442" stroke="#ff00ff"/>
<path d="M437 445L442 450M437 450L442 445" stroke="#ff00ff"/>
<path d="M447 456L452 461M447 461L452 456" stroke="#ff00ff"/>
<path d="M457 464L462 469M457 469L462 464" stroke="#ff00ff"/>
<path d="M468 468L473 473M468 473L473 468" stroke="#ff00ff"/>
<path d="M478 477L483 482M478 482L483 477" stroke="#ff00ff"/>
<polyline points="299.5,425.5 309.5,430.5 319.5,434.5 329.5,436.5 339.5,446.5 349.5,450.5 359.5,453.5 369.5,460.5 379.5,459.5 389.5,461.5 399.5,471.5" fill="none" stroke="#ff00ff" stroke-width="0.8"/>
<path d="M297 423L302 428M297 428L302 423" stroke="#ff00ff"/>
<path d="M307 428L312 433M307 433L312 428" stroke="#ff00ff"/>
<path d="M317 432L322 437M317 437L322 432" stroke="#ff00ff"/>
<path d="M327 434L332 439M327 439L332 434" stroke="#ff00ff"/>
<path d="M337 444L342 449M337 449L342 444" stroke="#ff00ff"/>
<path d="M347 448L352 453M347 453L352 448" stroke="#ff00ff"/>
<path d="M357 451L362 456M357 456L362 451" stroke="#ff00ff"/>
<path d="M367 458L372 463M367 463L372 458" stroke="#ff00ff"/>
<path d="M377 457L382 462M377 462L382 457" stroke="#ff00ff"/>
<path d="M387 459L392 464M387 464L392 459" stroke="#ff00ff"/>
<path d="M397 469L402 474M397 474L402 469" stroke="#ff00ff"/>
<polyline points="299.5,453.5 309.5,459.5 319.5,463.5 329.5,466.5" fill="none" stroke="#ff00ff" stroke-width="0.8"/>
<path d="M297 451L302 456M297 456L302 451" stroke="#ff00ff"/>
<path d="M307 457L312 462M307 462L312 457" stroke="#ff00ff"/>
<path d="M317 461L322 466M317 466L322 461" stroke="#ff00ff"/>
<path d="M327 464L332 469M327 469L332 464" stroke="#ff00ff"/>
<polyline points="299.5,482.5 309.5,479.5 319.5,473.5 329.5,468.5 339.5,461.5 349.5,451.5 359.5,451.5 369.5,445.5 379.5,436.5 389.5,427.5 399.5,423.5 409.5,417.5 419.5,409.5 429.5,404.5 439.5,395.5 449.5,388.5 459.5,387.5 470.5,381.5 480.5,377.5 490.5,370.5 500.5,367.5 510.5,362.5 520.5,357.5 530.5,353.5" fill="none" stroke="#ff00ff" stroke-width="0.8"/>
<path d="M297 480L302 485M297 485L302 480" stroke="#ff00ff"/>
<path d="M307 477L312 482M307 482L312 477" stroke="#ff00ff"/>
<path d="M317 471L322 476M317 476L322 471" stroke="#ff00ff"/>
<path d="M327 466L332 471M327 471L332 466" stroke="#ff00ff"/>
<path d="M337 459L342 464M337 464L342 459" stroke="#ff00ff"/>
<path d="M347 449L352 454M347 454L352 449" stroke="#ff00ff"/>
<path d="M357 449L362 454M357 454L362 449" stroke="#ff00ff"/>
<path d="M367 443L372 448M367 448L372 443" stroke="#ff00ff"/>
<path d="M377 434L382 439M377 439L382 434" stroke="#ff00ff"/>
<path d="M387 425L392 430M387 430L392 425" stroke="#ff00ff"/>
<path d="M397 421L402 426M397 426L402 421" stroke="#ff00ff"/>
<path d="M407 415L412 420M407 420L412 415" stroke="#ff00ff"/>
<path d="M417 407L422 412M417 412L422 407" stroke="#ff00ff"/>
<path d="M427 402L432 407M427 407L432 402" stroke="#ff00ff"/>
<path d="M437 393L442 398M437 398L442 393" stroke="#ff00ff"/>
<path d="M447 386L452 391M447 391L452 386" stroke="#ff00ff"/>
<path d="M457 385L462 390M457 390L462 385" stroke="#ff00ff"/>
<path d="M468 379L473 384M468 384L473 379" stroke="#ff00ff"/>
<path d="M478 375L483 380M478 380L483 375" stroke="#ff00ff"/>
<path d="M488 368L493 373M488 373L493 368" stroke="#ff00ff"/>
<path d="M498 365L503 370M498 370L503 365" stroke="#ff00ff"/>
<path d="M508 360L513 365M508 365L513 360" stroke="#ff00ff"/>
<path d="M518 355L523 360M518 360L523 355" stroke="#ff00ff"/>
<path d="M528 351L533 356M528 356L533 351" stroke="#ff00ff"/>
<polyline points="369.5,493.5 379.5,478.5 389.5,469.5 399.5,465.5 409.5,460.5 419.5,455.5 429.5,443.5 439.5,437.5 449.5,433.5 459.5,429.5 470.5,421.5 480.5,420.5 490.5,412.5 500.5,405.5 510.5,405.5 520.5,395.5" fill="none" stroke="#ff00ff" stroke-width="0.8"/>
<path d="M367 491L372 496M367 496L372 491" stroke="#ff00ff"/>
<path d="M377 476L382 481M377 481L382 476" stroke="#ff00ff"/>
<path d="M387 467L392 472M387 472L392 467" stroke="#ff00ff"/>
<path d="M397 463L402 468M397 468L402 463" stroke="#ff00ff"/>
<path d="M407 458L412 463M407 463L412 458" stroke="#ff00ff"/>
<path d="M417 453L422 458M417 458L422 453" stroke="#ff00ff"/>
<path d="M427 441L432 446M427 446L432 441" stroke="#ff00ff"/>
<path d="M437 435L442 440M437 440L442 435" stroke="#ff00ff"/>
<path d="M447 431L452 436M447 436L452 431" stroke="#ff00ff"/>
<path d="M457 427L462 432M457 432L462 427" stroke="#ff00ff"/>
<path d="M468 419L473 424M468 424L473 419" stroke="#ff00ff"/>
<path d="M478 418L483 423M478 423L483 418" stroke="#ff00ff"/>
<path d="M488 410L493 415M488 415L493 410" stroke="#ff00ff"/>
<path d="M498 403L503 408M498 408L503 403" stroke="#ff00ff"/>
<path d="M508 403L513 408M508 408L513 403" stroke="#ff00ff"/>
<path d="M518 393L523 398M518 398L523 393" stroke="#ff00ff"/>
<polyline points="419.5,488.5 429.5,480.5 439.5,471.5 449.5,463.5 459.5,458.5 470.5,451.5 480.5,449.5 490.5,446.5 500.5,440.5 510.5,434.5 520.5,426.5 530.5,421.5" fill="none" stroke="#ff00ff" stroke-width="0.8"/>
<path d="M417 486L422 491M417 491L422 486" stroke="#ff00ff"/>
<path d="M427 478L432 483M427 483L432 478" stroke="#ff00ff"/>
<path d="M437 469L442 474M437 474L442 469" stroke="#ff00ff"/>
<path d="M447 461L452 466M447 466L452 461" stroke="#ff00ff"/>
<path d="M457 456L462 461M457 461L462 456" stroke="#ff00ff"/>
<path d="M468 449L473 454M468 454L473 449" stroke="#ff00ff"/>
<path d="M478 447L483 452M478 452L483 447" stroke="#ff00ff"/>
<path d="M488 444L493 449M488 449L493 444" stroke="#ff00ff"/>
<path d="M498 438L503 443M498 443L503 438" stroke="#ff00ff"/>
<path d="M508 432L513 437M508 437L513 432" stroke="#ff00ff"/>
<path d="M518 424L523 429M518 429L523 424" stroke="#ff00ff"/>
<path d="M528 419L533 424M528 424L533 419" stroke="#ff00ff"/>
<polyline points="490.5,475.5 500.5,475.5 510.5,468.5 520.5,460.5 530.5,459.5" fill="none" stroke="#ff00ff" stroke-width="0.8"/>
<path d="M488 473L493 478M488 478L493 473" stroke="#ff00ff"/>
<path d="M498 473L503 478M498 478L503 473" stroke="#ff00ff"/>
<path d="M508 466L513 471M508 471L513 466" stroke="#ff00ff"/>
<path d="M518 458L523 463M518 463L523 458" stroke="#ff00ff"/>
<path d="M528 457L533 462M528 462L533 457" stroke="#ff00ff"/>
<polyline points="530.5,393.5 540.5,395.5 550.5,405.5 560.5,400.5 570.5,407.5 580.5,411.5 590.5,412.5" fill="none" stroke="#ff00ff" stroke-width="0.8"/>
<path d="M528 391L533 396M528 396L533 391" stroke="#ff00ff"/>
<path d="M538 393L543 398M538 398L543 393" stroke="#ff00ff"/>
<path d="M548 403L553 408M548 408L553 403" stroke="#ff00ff"/>
<path d="M558 398L563 403M558 403L563 398" stroke="#ff00ff"/>
<path d="M568 405L573 410M568 410L573 405" stroke="#ff00ff"/>
<path d="M578 409L583 414M578 414L583 409" stroke="#ff00ff"/>
<path d="M588 410L593 415M588 415L593 410" stroke="#ff00ff"/>
<polyline points="600.5,432.5 610.5,431.5 620.5,432.5" fill="none" stroke="#ff00ff" stroke-width="0.8"/>
<path d="M598 430L603 435M598 435L603 430" stroke="#ff00ff"/>
<path d="M608 429L613 434M608 434L613 429" stroke="#ff00ff"/>
<path d="M618 430L623 435M618 435L623 430" stroke="#ff00ff"/>
<polyline points="550.5,421.5 560.5,418.5 570.5,424.5 580.5,426.5 590.5,429.5 600.5,432.5 610.5,443.5 620.5,451.5 630.5,460.5 640.5,462.5 650.5,471.5 660.5,474.5" fill="none" stroke="#ff00ff" stroke-width="0.8"/>
<path d="M548 419L553 424M548 424L553 419" stroke="#ff00ff"/>
<path d="M558 416L563 421M558 421L563 416" stroke="#ff00ff"/>
<path d="M568 422L573 427M568 427L573 422" stroke="#ff00ff"/>
<path d="M578 424L583 429M578 429L583 424" stroke="#ff00ff"/>
<path d="M588 427L593 432M588 432L593 427" stroke="#ff00ff"/>
<path d="M598 430L603 435M598 435L603 430" stroke="#ff00ff"/>
<path d="M608 441L613 446M608 446L613 441" stroke="#ff00ff"/>
<path d="M618 449L623 454M618 454L623 449" stroke="#ff00ff"/>
<path d="M628 458L633 463M628 463L633 458" stroke="#ff00ff"/>
<path d="M638 460L643 465M638 465L643 460" stroke="#ff00ff"/>
<path d="M648 469L653 474M648 474L653 469" stroke="#ff00ff"/>
<path d="M658 472L663 477M658 477L663 472" stroke="#ff00ff"/>
<polyline points="530.5,439.5 540.5,439.5 550.5,452.5 560.5,455.5 570.5,464.5" fill="none" stroke="#ff00ff" stroke-width="0.8"/>
<path d="M528 437L533 442M528 442L533 437" stroke="#ff00ff"/>
<path d="M538 437L543 442M538 442L543 437" stroke="#ff00ff"/>
<path d="M548 450L553 455M548 455L553 450" stroke="#ff00ff"/>
<path d="M558 453L563 458M558 458L563 453" stroke="#ff00ff"/>
<path d="M568 462L573 467M568 467L573 462" stroke="#ff00ff"/>
<polyline points="590.5,467.5 600.5,478.5 610.5,485.5" fill="none" stroke="#ff00ff" stroke-width="0.8"/>
<path d="M588 465L593 470M588 470L593 465" stroke="#ff00ff"/>
<path d="M598 476L603 481M598 481L603 476" stroke="#ff00ff"/>
<path d="M608 483L613 488M608 488L613 483" stroke="#ff00ff"/>
<polyline points="530.5,485.5 540.5,477.5 550.5,480.5 560.5,463.5 570.5,460.5 580.5,460.5 590.5,448.5 600.5,446.5 610.5,442.5 620.5,434.5 630.5,431.5 640.5,419.5 650.5,419.5 660.5,409.5 670.5,399.5 680.5,402.5 690.5,393.5 700.5,388.5 710.5,387.5 720.5,376.5 730.5,370.5 740.5,368.5 750.5,360.5 761.5,366.5" fill="none" stroke="#ff00ff" stroke-width="0.8"/>
<path d="M528 483L533 488M528 488L533 483" stroke="#ff00ff"/>
<path d="M538 475L543 480M538 480L543 475" stroke="#ff00ff"/>
<path d="M548 478L553 483M548 483L553 478" stroke="#ff00ff"/>
<path d="M558 461L563 466M558 466L563 461" stroke="#ff00ff"/>
<path d="M568 458L573 463M568 463L573 458" stroke="#ff00ff"/>
<path d="M578 458L583 463M578 463L583 458" stroke="#ff00ff"/>
<path d="M588 446L593 451M588 451L593 446" stroke="#ff00ff"/>
<path d="M598 444L603 449M598 449L603 444" stroke="#ff00ff"/>
<path d="M608 440L613 445M608 445L613 440" stroke="#ff00ff"/>
<path d="M618 432L623 437M618 437L623 432" stroke="#ff00ff"/>
<path d="M628 429L633 434M628 434L633 429" stroke="#ff00ff"/>
<path d="M638 417L643 422M638 422L643 417" stroke="#ff00ff"/>
<path d="M648 417L653 422M648 422L653 417" stroke="#ff00ff"/>
<path d="M658 407L663 412M658 412L663 407" stroke="#ff00ff"/>
<path d="M668 397L673 402M668 402L673 397" stroke="#ff00ff"/>
<path d="M678 400L683 405M678 405L683 400" stroke="#ff00ff"/>
<path d="M688 391L693 396M688 396L693 391" stroke="#ff00ff"/>
<path d="M698 386L703 391M698 391L703 386" stroke="#ff00ff"/>
<path d="M708 385L713 390M708 390L713 385" stroke="#ff00ff"/>
<path d="M718 374L723 379M718 379L723 374" stroke="#ff00ff"/>
<path d="M728 368L733 373M728 373L733 368" stroke="#ff00ff"/>
<path d="M738 366L743 371M738 371L743 366" stroke="#ff00ff"/>
<path d="M748 358L753 363M748 363L753 358" stroke="#ff00ff"/>
<path d="M759 364L764 369M759 369L764 364" stroke="#ff00ff"/>
<polyline points="580.5,487.5 590.5,480.5 600.5,478.5 610.5,465.5 620.5,460.5 630.5,456.5 640.5,449.5 650.5,446.5 660.5,439.5 670.5,431.5 680.5,424.5 690.5,424.5 700.5,417.5 710.5,409.5 720.5,404.5 730.5,400.5 740.5,392.5 750.5,383.5 761.5,385.5" fill="none" stroke="#ff00ff" stroke-width="0.8"/>
<path d="M578 485L583 490M578 490L583 485" stroke="#ff00ff"/>
<path d="M588 478L593 483M588 483L593 478" stroke="#ff00ff"/>
<path d="M598 476L603 481M598 481L603 476" stroke="#ff00ff"/>
<path d="M608 463L613 468M608 468L613 463" stroke="#ff00ff"/>
<path d="M618 458L623 463M618 463L623 458" stroke="#ff00ff"/>
<path d="M628 454L633 459M628 459L633 454" stroke="#ff00ff"/>
<path d="M638 447L643 452M638 452L643 447" stroke="#ff00ff"/>
<path d="M648 444L653 449M648 449L653 444" stroke="#ff00ff"/>
<path d="M658 437L663 442M658 442L663 437" stroke="#ff00ff"/>
<path d="M668 429L673 434M668 434L673 429" stroke="#ff00ff"/>
<path d="M678 422L683 427M678 427L683 422" stroke="#ff00ff"/>
<path d="M688 422L693 427M688 427L693 422" stroke="#ff00ff"/>
<path d="M698 415L703 420M698 420L703 415" stroke="#ff00ff"/>
<path d="M708 407L713 412M708 412L713 407" stroke="#ff00ff"/>
<path d="M718 402L723 407M718 407L723 402" stroke="#ff00ff"/>
<path d="M728 398L733 403M728 403L733 398" stroke="#ff00ff"/>
<path d="M738 390L743 395M738 395L743 390" stroke="#ff00ff"/>
<path d="M748 381L753 386M748 386L753 381" stroke="#ff00ff"/>
<path d="M759 383L764 388M759 388L764 383" stroke="#ff00ff"/>
<polyline points="620.5,498.5 630.5,489.5 640.5,482.5 650.5,475.5 660.5,466.5 670.5,457.5 680.5,450.5" fill="none" stroke="#ff00ff" stroke-width="0.8"/>
<path d="M618 496L623 501M618 501L623 496" stroke="#ff00ff"/>
<path d="M628 487L633 492M628 492L633 487" stroke="#ff00ff"/>
<path d="M638 480L643 485M638 485L643 480" stroke="#ff00ff"/>
<path d="M648 473L653 478M648 478L653 473" stroke="#ff00ff"/>
<path d="M658 464L663 469M658 469L663 464" stroke="#ff00ff"/>
<path d="M668 455L673 460M668 460L673 455" stroke="#ff00ff"/>
<path d="M678 448L683 453M678 453L683 448" stroke="#ff00ff"/>
<polyline points="640.5,443.5 650.5,448.5 660.5,456.5 670.5,459.5 680.5,461.5" fill="none" stroke="#ff00ff" stroke-width="0.8"/>
<path d="M638 441L643 446M638 446L643 441" stroke="#ff00ff"/>
<path d="M648 446L653 451M648 451L653 446" stroke="#ff00ff"/>
<path d="M658 454L663 459M658 459L663 454" stroke="#ff00ff"/>
<path d="M668 457L673 462M668 462L673 457" stroke="#ff00ff"/>
<path d="M678 459L683 464M678 464L683 459" stroke="#ff00ff"/>
<polyline points="680.5,479.5 690.5,478.5" fill="none" stroke="#ff00ff" stroke-width="0.8"/>
<path d="M678 477L683 482M678 482L683 477" stroke="#ff00ff"/>
<path d="M688 476L693 481M688 481L693 476" stroke="#ff00ff"/>
<polyline points="700.5,441.5 710.5,436.5 720.5,431.5 730.5,426.5 740.5,420.5 750.5,412.5 761.5,414.5" fill="none" stroke="#ff00ff" stroke-width="0.8"/>
<path d="M698 439L703 444M698 444L703 439" stroke="#ff00ff"/>
<path d="M708 434L713 439M708 439L713 434" stroke="#ff00ff"/>
<path d="M718 429L723 434M718 434L723 429" stroke="#ff00ff"/>
<path d="M728 424L733 429M728 429L733 424" stroke="#ff00ff"/>
<path d="M738 418L743 423M738 423L743 418" stroke="#ff00ff"/>
<path d="M748 410L753 415M748 415L753 410" stroke="#ff00ff"/>
<path d="M759 412L764 417M759 417L764 412" stroke="#ff00ff"/>
<polyline points="710.5,465.5 720.5,456.5 730.5,451.5 740.5,443.5 750.5,439.5 761.5,439.5" fill="none" stroke="#ff00ff" stroke-width="0.8"/>
<path d="M708 463L713 468M708 468L713 463" stroke="#ff00ff"/>
<path d="M718 454L723 459M718 459L723 454" stroke="#ff00ff"/>
<path d="M728 449L733 454M728 454L733 449" stroke="#ff00ff"/>
<path d="M738 441L743 446M738 446L743 441" stroke="#ff00ff"/>
<path d="M748 437L753 442M748 442L753 437" stroke="#ff00ff"/>
<path d="M759 437L764 442M759 442L764 437" stroke="#ff00ff"/>
<polyline points="700.5,441.5 710.5,448.5 720.5,448.5 730.5,458.5 740.5,461.5 750.5,465.5" fill="none" stroke="#ff00ff" stroke-width="0.8"/>
<path d="M698 439L703 444M698 444L703 439" stroke="#ff00ff"/>
<path d="M708 446L713 451M708 451L713 446" stroke="#ff00ff"/>
<path d="M718 446L723 451M718 451L723 446" stroke="#ff00ff"/>
<path d="M728 456L733 461M728 461L733 456" stroke="#ff00ff"/>
<path d="M738 459L743 464M738 464L743 459" stroke="#ff00ff"/>
<path d="M748 463L753 468M748 468L753 463" stroke="#ff00ff"/>
<path d="M718 478L723 483M718 483L723 478" stroke="#ff00ff"/>
<polyline points="189.5,485.5 199.5,497.5 209.5,503.5 219.5,515.5 229.5,528.5 239.5,529.5 249.5,532.5" fill="none" stroke="#0000ff" stroke-width="0.8"/>
<path d="M187 483L192 488M187 488L192 483M187 485.5H192M189.5 483V488" stroke="#0000ff"/><rect x="188" y="484" width="3" height="3" fill="#0000ff"/>
<path d="M197 495L202 500M197 500L202 495M197 497.5H202M199.5 495V500" stroke="#0000ff"/><rect x="198" y="496" width="3" height="3" fill="#0000ff"/>
<path d="M207 501L212 506M207 506L212 501M207 503.5H212M209.5 501V506" stroke="#0000ff"/><rect x="208" y="502" width="3" height="3" fill="#0000ff"/>
<path d="M217 513L222 518M217 518L222 513M217 515.5H222M219.5 513V518" stroke="#0000ff"/><rect x="218" y="514" width="3" height="3" fill="#0000ff"/>
<path d="M227 526L232 531M227 531L232 526M227 528.5H232M229.5 526V531" stroke="#0000ff"/><rect x="228" y="527" width="3" height="3" fill="#0000ff"/>
<path d="M237 527L242 532M237 532L242 527M237 529.5H242M239.5 527V532" stroke="#0000ff"/><rect x="238" y="528" width="3" height="3" fill="#0000ff"/>
<path d="M247 530L252 535M247 535L252 530M247 532.5H252M249.5 530V535" stroke="#0000ff"/><rect x="248" y="531" width="3" height="3" fill="#0000ff"/>
<polyline points="229.5,528.5 239.5,521.5 249.5,514.5 259.5,504.5 269.5,499.5 279.5,492.5 289.5,485.5" fill="none" stroke="#0000ff" stroke-width="0.8"/>
<path d="M227 526L232 531M227 531L232 526M227 528.5H232M229.5 526V531" stroke="#0000ff"/><rect x="228" y="527" width="3" height="3" fill="#0000ff"/>
<path d="M237 519L242 524M237 524L242 519M237 521.5H242M239.5 519V524" stroke="#0000ff"/><rect x="238" y="520" width="3" height="3" fill="#0000ff"/>
<path d="M247 512L252 517M247 517L252 512M247 514.5H252M249.5 512V517" stroke="#0000ff"/><rect x="248" y="513" width="3" height="3" fill="#0000ff"/>
<path d="M257 502L262 507M257 507L262 502M257 504.5H262M259.5 502V507" stroke="#0000ff"/><rect x="258" y="503" width="3" height="3" fill="#0000ff"/>
<path d="M267 497L272 502M267 502L272 497M267 499.5H272M269.5 497V502" stroke="#0000ff"/><rect x="268" y="498" width="3" height="3" fill="#0000ff"/>
<path d="M277 490L282 495M277 495L282 490M277 492.5H282M279.5 490V495" stroke="#0000ff"/><rect x="278" y="491" width="3" height="3" fill="#0000ff"/>
<path d="M287 483L292 488M287 488L292 483M287 485.5H292M289.5 483V488" stroke="#0000ff"/><rect x="288" y="484" width="3" height="3" fill="#0000ff"/>
<polyline points="249.5,497.5 259.5,504.5 269.5,514.5 279.5,522.5 289.5,529.5 299.5,538.5 309.5,546.5" fill="none" stroke="#0000ff" stroke-width="0.8"/>
<path d="M247 495L252 500M247 500L252 495M247 497.5H252M249.5 495V500" stroke="#0000ff"/><rect x="248" y="496" width="3" height="3" fill="#0000ff"/>
<path d="M257 502L262 507M257 507L262 502M257 504.5H262M259.5 502V507" stroke="#0000ff"/><rect x="258" y="503" width="3" height="3" fill="#0000ff"/>
<path d="M267 512L272 517M267 517L272 512M267 514.5H272M269.5 512V517" stroke="#0000ff"/><rect x="268" y="513" width="3" height="3" fill="#0000ff"/>
<path d="M277 520L282 525M277 525L282 520M277 522.5H282M279.5 520V525" stroke="#0000ff"/><rect x="278" y="521" width="3" height="3" fill="#0000ff"/>
<path d="M287 527L292 532M287 532L292 527M287 529.5H292M289.5 527V532" stroke="#0000ff"/><rect x="288" y="528" width="3" height="3" fill="#0000ff"/>
<path d="M297 536L302 541M297 541L302 536M297 538.5H302M299.5 536V541" stroke="#0000ff"/><rect x="298" y="537" width="3" height="3" fill="#0000ff"/>
<path d="M307 544L312 549M307 549L312 544M307 546.5H312M309.5 544V549" stroke="#0000ff"/><rect x="308" y="545" width="3" height="3" fill="#0000ff"/>
<polyline points="189.5,528.5 199.5,538.5" fill="none" stroke="#0000ff" stroke-width="0.8"/>
<path d="M187 526L192 531M187 531L192 526M187 528.5H192M189.5 526V531" stroke="#0000ff"/><rect x="188" y="527" width="3" height="3" fill="#0000ff"/>
<path d="M197 536L202 541M197 541L202 536M197 538.5H202M199.5 536V541" stroke="#0000ff"/><rect x="198" y="537" width="3" height="3" fill="#0000ff"/>
<polyline points="299.5,475.5 309.5,486.5 319.5,491.5 329.5,505.5 339.5,514.5 349.5,519.5" fill="none" stroke="#0000ff" stroke-width="0.8"/>
<path d="M297 473L302 478M297 478L302 473M297 475.5H302M299.5 473V478" stroke="#0000ff"/><rect x="298" y="474" width="3" height="3" fill="#0000ff"/>
<path d="M307 484L312 489M307 489L312 484M307 486.5H312M309.5 484V489" stroke="#0000ff"/><rect x="308" y="485" width="3" height="3" fill="#0000ff"/>
<path d="M317 489L322 494M317 494L322 489M317 491.5H322M319.5 489V494" stroke="#0000ff"/><rect x="318" y="490" width="3" height="3" fill="#0000ff"/>
<path d="M327 503L332 508M327 508L332 503M327 505.5H332M329.5 503V508" stroke="#0000ff"/><rect x="328" y="504" width="3" height="3" fill="#0000ff"/>
<path d="M337 512L342 517M337 517L342 512M337 514.5H342M339.5 512V517" stroke="#0000ff"/><rect x="338" y="513" width="3" height="3" fill="#0000ff"/>
<path d="M347 517L352 522M347 522L352 517M347 519.5H352M349.5 517V522" stroke="#0000ff"/><rect x="348" y="518" width="3" height="3" fill="#0000ff"/>
<polyline points="289.5,537.5 299.5,529.5 309.5,529.5 319.5,522.5 329.5,505.5 339.5,507.5 349.5,498.5 359.5,493.5" fill="none" stroke="#0000ff" stroke-width="0.8"/>
<path d="M287 535L292 540M287 540L292 535M287 537.5H292M289.5 535V540" stroke="#0000ff"/><rect x="288" y="536" width="3" height="3" fill="#0000ff"/>
<path d="M297 527L302 532M297 532L302 527M297 529.5H302M299.5 527V532" stroke="#0000ff"/><rect x="298" y="528" width="3" height="3" fill="#0000ff"/>
<path d="M307 527L312 532M307 532L312 527M307 529.5H312M309.5 527V532" stroke="#0000ff"/><rect x="308" y="528" width="3" height="3" fill="#0000ff"/>
<path d="M317 520L322 525M317 525L322 520M317 522.5H322M319.5 520V525" stroke="#0000ff"/><rect x="318" y="521" width="3" height="3" fill="#0000ff"/>
<path d="M327 503L332 508M327 508L332 503M327 505.5H332M329.5 503V508" stroke="#0000ff"/><rect x="328" y="504" width="3" height="3" fill="#0000ff"/>
<path d="M337 505L342 510M337 510L342 505M337 507.5H342M339.5 505V510" stroke="#0000ff"/><rect x="338" y="506" width="3" height="3" fill="#0000ff"/>
<path d="M347 496L352 501M347 501L352 496M347 498.5H352M349.5 496V501" stroke="#0000ff"/><rect x="348" y="497" width="3" height="3" fill="#0000ff"/>
<path d="M357 491L362 496M357 496L362 491M357 493.5H362M359.5 491V496" stroke="#0000ff"/><rect x="358" y="492" width="3" height="3" fill="#0000ff"/>
<polyline points="349.5,479.5 359.5,490.5 369.5,497.5 379.5,499.5 389.5,500.5 399.5,508.5 409.5,517.5" fill="none" stroke="#0000ff" stroke-width="0.8"/>
<path d="M347 477L352 482M347 482L352 477M347 479.5H352M349.5 477V482" stroke="#0000ff"/><rect x="348" y="478" width="3" height="3" fill="#0000ff"/>
<path d="M357 488L362 493M357 493L362 488M357 490.5H362M359.5 488V493" stroke="#0000ff"/><rect x="358" y="489" width="3" height="3" fill="#0000ff"/>
<path d="M367 495L372 500M367 500L372 495M367 497.5H372M369.5 495V500" stroke="#0000ff"/><rect x="368" y="496" width="3" height="3" fill="#0000ff"/>
<path d="M377 497L382 502M377 502L382 497M377 499.5H382M379.5 497V502" stroke="#0000ff"/><rect x="378" y="498" width="3" height="3" fill="#0000ff"/>
<path d="M387 498L392 503M387 503L392 498M387 500.5H392M389.5 498V503" stroke="#0000ff"/><rect x="388" y="499" width="3" height="3" fill="#0000ff"/>
<path d="M397 506L402 511M397 511L402 506M397 508.5H402M399.5 506V511" stroke="#0000ff"/><rect x="398" y="507" width="3" height="3" fill="#0000ff"/>
<path d="M407 515L412 520M407 520L412 515M407 517.5H412M409.5 515V520" stroke="#0000ff"/><rect x="408" y="516" width="3" height="3" fill="#0000ff"/>
<polyline points="359.5,531.5 369.5,526.5 379.5,514.5 389.5,507.5 399.5,502.5 409.5,493.5" fill="none" stroke="#0000ff" stroke-width="0.8"/>
<path d="M357 529L362 534M357 534L362 529M357 531.5H362M359.5 529V534" stroke="#0000ff"/><rect x="358" y="530" width="3" height="3" fill="#0000ff"/>
<path d="M367 524L372 529M367 529L372 524M367 526.5H372M369.5 524V529" stroke="#0000ff"/><rect x="368" y="525" width="3" height="3" fill="#0000ff"/>
<path d="M377 512L382 517M377 517L382 512M377 514.5H382M379.5 512V517" stroke="#0000ff"/><rect x="378" y="513" width="3" height="3" fill="#0000ff"/>
<path d="M387 505L392 510M387 510L392 505M387 507.5H392M389.5 505V510" stroke="#0000ff"/><rect x="388" y="506" width="3" height="3" fill="#0000ff"/>
<path d="M397 500L402 505M397 505L402 500M397 502.5H402M399.5 500V505" stroke="#0000ff"/><rect x="398" y="501" width="3" height="3" fill="#0000ff"/>
<path d="M407 491L412 496M407 496L412 491M407 493.5H412M409.5 491V496" stroke="#0000ff"/><rect x="408" y="492" width="3" height="3" fill="#0000ff"/>
<polyline points="409.5,479.5 419.5,483.5 429.5,484.5 439.5,485.5 449.5,495.5 459.5,505.5 470.5,516.5 480.5,518.5 490.5,517.5 500.5,524.5" fill="none" stroke="#0000ff" stroke-width="0.8"/>
<path d="M407 477L412 482M407 482L412 477M407 479.5H412M409.5 477V482" stroke="#0000ff"/><rect x="408" y="478" width="3" height="3" fill="#0000ff"/>
<path d="M417 481L422 486M417 486L422 481M417 483.5H422M419.5 481V486" stroke="#0000ff"/><rect x="418" y="482" width="3" height="3" fill="#0000ff"/>
<path d="M427 482L432 487M427 487L432 482M427 484.5H432M429.5 482V487" stroke="#0000ff"/><rect x="428" y="483" width="3" height="3" fill="#0000ff"/>
<path d="M437 483L442 488M437 488L442 483M437 485.5H442M439.5 483V488" stroke="#0000ff"/><rect x="438" y="484" width="3" height="3" fill="#0000ff"/>
<path d="M447 493L452 498M447 498L452 493M447 495.5H452M449.5 493V498" stroke="#0000ff"/><rect x="448" y="494" width="3" height="3" fill="#0000ff"/>
<path d="M457 503L462 508M457 508L462 503M457 505.5H462M459.5 503V508" stroke="#0000ff"/><rect x="458" y="504" width="3" height="3" fill="#0000ff"/>
<path d="M468 514L473 519M468 519L473 514M468 516.5H473M470.5 514V519" stroke="#0000ff"/><rect x="469" y="515" width="3" height="3" fill="#0000ff"/>
<path d="M478 516L483 521M478 521L483 516M478 518.5H483M480.5 516V521" stroke="#0000ff"/><rect x="479" y="517" width="3" height="3" fill="#0000ff"/>
<path d="M488 515L493 520M488 520L493 515M488 517.5H493M490.5 515V520" stroke="#0000ff"/><rect x="489" y="516" width="3" height="3" fill="#0000ff"/>
<path d="M498 522L503 527M498 527L503 522M498 524.5H503M500.5 522V527" stroke="#0000ff"/><rect x="499" y="523" width="3" height="3" fill="#0000ff"/>
<polyline points="409.5,538.5 419.5,527.5 429.5,519.5 439.5,512.5 449.5,500.5 459.5,489.5 470.5,489.5" fill="none" stroke="#0000ff" stroke-width="0.8"/>
<path d="M407 536L412 541M407 541L412 536M407 538.5H412M409.5 536V541" stroke="#0000ff"/><rect x="408" y="537" width="3" height="3" fill="#0000ff"/>
<path d="M417 525L422 530M417 530L422 525M417 527.5H422M419.5 525V530" stroke="#0000ff"/><rect x="418" y="526" width="3" height="3" fill="#0000ff"/>
<path d="M427 517L432 522M427 522L432 517M427 519.5H432M429.5 517V522" stroke="#0000ff"/><rect x="428" y="518" width="3" height="3" fill="#0000ff"/>
<path d="M437 510L442 515M437 515L442 510M437 512.5H442M439.5 510V515" stroke="#0000ff"/><rect x="438" y="511" width="3" height="3" fill="#0000ff"/>
<path d="M447 498L452 503M447 503L452 498M447 500.5H452M449.5 498V503" stroke="#0000ff"/><rect x="448" y="499" width="3" height="3" fill="#0000ff"/>
<path d="M457 487L462 492M457 492L462 487M457 489.5H462M459.5 487V492" stroke="#0000ff"/><rect x="458" y="488" width="3" height="3" fill="#0000ff"/>
<path d="M468 487L473 492M468 492L473 487M468 489.5H473M470.5 487V492" stroke="#0000ff"/><rect x="469" y="488" width="3" height="3" fill="#0000ff"/>
<polyline points="470.5,519.5 480.5,516.5 490.5,503.5 500.5,495.5" fill="none" stroke="#0000ff" stroke-width="0.8"/>
<path d="M468 517L473 522M468 522L473 517M468 519.5H473M470.5 517V522" stroke="#0000ff"/><rect x="469" y="518" width="3" height="3" fill="#0000ff"/>
<path d="M478 514L483 519M478 519L483 514M478 516.5H483M480.5 514V519" stroke="#0000ff"/><rect x="479" y="515" width="3" height="3" fill="#0000ff"/>
<path d="M488 501L493 506M488 506L493 501M488 503.5H493M490.5 501V506" stroke="#0000ff"/><rect x="489" y="502" width="3" height="3" fill="#0000ff"/>
<path d="M498 493L503 498M498 498L503 493M498 495.5H503M500.5 493V498" stroke="#0000ff"/><rect x="499" y="494" width="3" height="3" fill="#0000ff"/>
<polyline points="500.5,489.5 510.5,494.5 520.5,501.5 530.5,507.5 540.5,510.5 550.5,529.5 560.5,534.5 570.5,551.5" fill="none" stroke="#0000ff" stroke-width="0.8"/>
<path d="M498 487L503 492M498 492L503 487M498 489.5H503M500.5 487V492" stroke="#0000ff"/><rect x="499" y="488" width="3" height="3" fill="#0000ff"/>
<path d="M508 492L513 497M508 497L513 492M508 494.5H513M510.5 492V497" stroke="#0000ff"/><rect x="509" y="493" width="3" height="3" fill="#0000ff"/>
<path d="M518 499L523 504M518 504L523 499M518 501.5H523M520.5 499V504" stroke="#0000ff"/><rect x="519" y="500" width="3" height="3" fill="#0000ff"/>
<path d="M528 505L533 510M528 510L533 505M528 507.5H533M530.5 505V510" stroke="#0000ff"/><rect x="529" y="506" width="3" height="3" fill="#0000ff"/>
<path d="M538 508L543 513M538 513L543 508M538 510.5H543M540.5 508V513" stroke="#0000ff"/><rect x="539" y="509" width="3" height="3" fill="#0000ff"/>
<path d="M548 527L553 532M548 532L553 527M548 529.5H553M550.5 527V532" stroke="#0000ff"/><rect x="549" y="528" width="3" height="3" fill="#0000ff"/>
<path d="M558 532L563 537M558 537L563 532M558 534.5H563M560.5 532V537" stroke="#0000ff"/><rect x="559" y="533" width="3" height="3" fill="#0000ff"/>
<path d="M568 549L573 554M568 554L573 549M568 551.5H573M570.5 549V554" stroke="#0000ff"/><rect x="569" y="550" width="3" height="3" fill="#0000ff"/>
<polyline points="500.5,541.5 510.5,529.5 520.5,521.5 530.5,517.5 540.5,510.5 550.5,510.5 560.5,496.5" fill="none" stroke="#0000ff" stroke-width="0.8"/>
<path d="M498 539L503 544M498 544L503 539M498 541.5H503M500.5 539V544" stroke="#0000ff"/><rect x="499" y="540" width="3" height="3" fill="#0000ff"/>
<path d="M508 527L513 532M508 532L513 527M508 529.5H513M510.5 527V532" stroke="#0000ff"/><rect x="509" y="528" width="3" height="3" fill="#0000ff"/>
<path d="M518 519L523 524M518 524L523 519M518 521.5H523M520.5 519V524" stroke="#0000ff"/><rect x="519" y="520" width="3" height="3" fill="#0000ff"/>
<path d="M528 515L533 520M528 520L533 515M528 517.5H533M530.5 515V520" stroke="#0000ff"/><rect x="529" y="516" width="3" height="3" fill="#0000ff"/>
<path d="M538 508L543 513M538 513L543 508M538 510.5H543M540.5 508V513" stroke="#0000ff"/><rect x="539" y="509" width="3" height="3" fill="#0000ff"/>
<path d="M548 508L553 513M548 513L553 508M548 510.5H553M550.5 508V513" stroke="#0000ff"/><rect x="549" y="509" width="3" height="3" fill="#0000ff"/>
<path d="M558 494L563 499M558 499L563 494M558 496.5H563M560.5 494V499" stroke="#0000ff"/><rect x="559" y="495" width="3" height="3" fill="#0000ff"/>
<polyline points="570.5,499.5 580.5,504.5 590.5,513.5 600.5,526.5 610.5,536.5 620.5,544.5" fill="none" stroke="#0000ff" stroke-width="0.8"/>
<path d="M568 497L573 502M568 502L573 497M568 499.5H573M570.5 497V502" stroke="#0000ff"/><rect x="569" y="498" width="3" height="3" fill="#0000ff"/>
<path d="M578 502L583 507M578 507L583 502M578 504.5H583M580.5 502V507" stroke="#0000ff"/><rect x="579" y="503" width="3" height="3" fill="#0000ff"/>
<path d="M588 511L593 516M588 516L593 511M588 513.5H593M590.5 511V516" stroke="#0000ff"/><rect x="589" y="512" width="3" height="3" fill="#0000ff"/>
<path d="M598 524L603 529M598 529L603 524M598 526.5H603M600.5 524V529" stroke="#0000ff"/><rect x="599" y="525" width="3" height="3" fill="#0000ff"/>
<path d="M608 534L613 539M608 539L613 534M608 536.5H613M610.5 534V539" stroke="#0000ff"/><rect x="609" y="535" width="3" height="3" fill="#0000ff"/>
<path d="M618 542L623 547M618 547L623 542M618 544.5H623M620.5 542V547" stroke="#0000ff"/><rect x="619" y="543" width="3" height="3" fill="#0000ff"/>
<polyline points="560.5,526.5 570.5,524.5 580.5,519.5 590.5,513.5 600.5,508.5 610.5,504.5" fill="none" stroke="#0000ff" stroke-width="0.8"/>
<path d="M558 524L563 529M558 529L563 524M558 526.5H563M560.5 524V529" stroke="#0000ff"/><rect x="559" y="525" width="3" height="3" fill="#0000ff"/>
<path d="M568 522L573 527M568 527L573 522M568 524.5H573M570.5 522V527" stroke="#0000ff"/><rect x="569" y="523" width="3" height="3" fill="#0000ff"/>
<path d="M578 517L583 522M578 522L583 517M578 519.5H583M580.5 517V522" stroke="#0000ff"/><rect x="579" y="518" width="3" height="3" fill="#0000ff"/>
<path d="M588 511L593 516M588 516L593 511M588 513.5H593M590.5 511V516" stroke="#0000ff"/><rect x="589" y="512" width="3" height="3" fill="#0000ff"/>
<path d="M598 506L603 511M598 511L603 506M598 508.5H603M600.5 506V511" stroke="#0000ff"/><rect x="599" y="507" width="3" height="3" fill="#0000ff"/>
<path d="M608 502L613 507M608 507L613 502M608 504.5H613M610.5 502V507" stroke="#0000ff"/><rect x="609" y="503" width="3" height="3" fill="#0000ff"/>
<polyline points="610.5,546.5 620.5,528.5 630.5,521.5 640.5,513.5 650.5,511.5 660.5,498.5 670.5,487.5" fill="none" stroke="#0000ff" stroke-width="0.8"/>
<path d="M608 544L613 549M608 549L613 544M608 546.5H613M610.5 544V549" stroke="#0000ff"/><rect x="609" y="545" width="3" height="3" fill="#0000ff"/>
<path d="M618 526L623 531M618 531L623 526M618 528.5H623M620.5 526V531" stroke="#0000ff"/><rect x="619" y="527" width="3" height="3" fill="#0000ff"/>
<path d="M628 519L633 524M628 524L633 519M628 521.5H633M630.5 519V524" stroke="#0000ff"/><rect x="629" y="520" width="3" height="3" fill="#0000ff"/>
<path d="M638 511L643 516M638 516L643 511M638 513.5H643M640.5 511V516" stroke="#0000ff"/><rect x="639" y="512" width="3" height="3" fill="#0000ff"/>
<path d="M648 509L653 514M648 514L653 509M648 511.5H653M650.5 509V514" stroke="#0000ff"/><rect x="649" y="510" width="3" height="3" fill="#0000ff"/>
<path d="M658 496L663 501M658 501L663 496M658 498.5H663M660.5 496V501" stroke="#0000ff"/><rect x="659" y="497" width="3" height="3" fill="#0000ff"/>
<path d="M668 485L673 490M668 490L673 485M668 487.5H673M670.5 485V490" stroke="#0000ff"/><rect x="669" y="486" width="3" height="3" fill="#0000ff"/>
<polyline points="620.5,492.5 630.5,500.5 640.5,503.5 650.5,511.5 660.5,514.5 670.5,519.5" fill="none" stroke="#0000ff" stroke-width="0.8"/>
<path d="M618 490L623 495M618 495L623 490M618 492.5H623M620.5 490V495" stroke="#0000ff"/><rect x="619" y="491" width="3" height="3" fill="#0000ff"/>
<path d="M628 498L633 503M628 503L633 498M628 500.5H633M630.5 498V503" stroke="#0000ff"/><rect x="629" y="499" width="3" height="3" fill="#0000ff"/>
<path d="M638 501L643 506M638 506L643 501M638 503.5H643M640.5 501V506" stroke="#0000ff"/><rect x="639" y="502" width="3" height="3" fill="#0000ff"/>
<path d="M648 509L653 514M648 514L653 509M648 511.5H653M650.5 509V514" stroke="#0000ff"/><rect x="649" y="510" width="3" height="3" fill="#0000ff"/>
<path d="M658 512L663 517M658 517L663 512M658 514.5H663M660.5 512V517" stroke="#0000ff"/><rect x="659" y="513" width="3" height="3" fill="#0000ff"/>
<path d="M668 517L673 522M668 522L673 517M668 519.5H673M670.5 517V522" stroke="#0000ff"/><rect x="669" y="518" width="3" height="3" fill="#0000ff"/>
<polyline points="670.5,534.5 680.5,526.5 690.5,518.5 700.5,509.5 710.5,498.5 720.5,494.5 730.5,488.5 740.5,482.5 750.5,473.5" fill="none" stroke="#0000ff" stroke-width="0.8"/>
<path d="M668 532L673 537M668 537L673 532M668 534.5H673M670.5 532V537" stroke="#0000ff"/><rect x="669" y="533" width="3" height="3" fill="#0000ff"/>
<path d="M678 524L683 529M678 529L683 524M678 526.5H683M680.5 524V529" stroke="#0000ff"/><rect x="679" y="525" width="3" height="3" fill="#0000ff"/>
<path d="M688 516L693 521M688 521L693 516M688 518.5H693M690.5 516V521" stroke="#0000ff"/><rect x="689" y="517" width="3" height="3" fill="#0000ff"/>
<path d="M698 507L703 512M698 512L703 507M698 509.5H703M700.5 507V512" stroke="#0000ff"/><rect x="699" y="508" width="3" height="3" fill="#0000ff"/>
<path d="M708 496L713 501M708 501L713 496M708 498.5H713M710.5 496V501" stroke="#0000ff"/><rect x="709" y="497" width="3" height="3" fill="#0000ff"/>
<path d="M718 492L723 497M718 497L723 492M718 494.5H723M720.5 492V497" stroke="#0000ff"/><rect x="719" y="493" width="3" height="3" fill="#0000ff"/>
<path d="M728 486L733 491M728 491L733 486M728 488.5H733M730.5 486V491" stroke="#0000ff"/><rect x="729" y="487" width="3" height="3" fill="#0000ff"/>
<path d="M738 480L743 485M738 485L743 480M738 482.5H743M740.5 480V485" stroke="#0000ff"/><rect x="739" y="481" width="3" height="3" fill="#0000ff"/>
<path d="M748 471L753 476M748 476L753 471M748 473.5H753M750.5 471V476" stroke="#0000ff"/><rect x="749" y="472" width="3" height="3" fill="#0000ff"/>
<polyline points="730.5,492.5 740.5,499.5 750.5,502.5 761.5,505.5" fill="none" stroke="#0000ff" stroke-width="0.8"/>
<path d="M728 490L733 495M728 495L733 490M728 492.5H733M730.5 490V495" stroke="#0000ff"/><rect x="729" y="491" width="3" height="3" fill="#0000ff"/>
<path d="M738 497L743 502M738 502L743 497M738 499.5H743M740.5 497V502" stroke="#0000ff"/><rect x="739" y="498" width="3" height="3" fill="#0000ff"/>
<path d="M748 500L753 505M748 505L753 500M748 502.5H753M750.5 500V505" stroke="#0000ff"/><rect x="749" y="501" width="3" height="3" fill="#0000ff"/>
<path d="M759 503L764 508M759 508L764 503M759 505.5H764M761.5 503V508" stroke="#0000ff"/><rect x="760" y="504" width="3" height="3" fill="#0000ff"/>
<polyline points="670.5,479.5 680.5,484.5 690.5,485.5 700.5,497.5 710.5,503.5 720.5,505.5 730.5,519.5 740.5,524.5" fill="none" stroke="#0000ff" stroke-width="0.8"/>
<path d="M668 477L673 482M668 482L673 477M668 479.5H673M670.5 477V482" stroke="#0000ff"/><rect x="669" y="478" width="3" height="3" fill="#0000ff"/>
<path d="M678 482L683 487M678 487L683 482M678 484.5H683M680.5 482V487" stroke="#0000ff"/><rect x="679" y="483" width="3" height="3" fill="#0000ff"/>
<path d="M688 483L693 488M688 488L693 483M688 485.5H693M690.5 483V488" stroke="#0000ff"/><rect x="689" y="484" width="3" height="3" fill="#0000ff"/>
<path d="M698 495L703 500M698 500L703 495M698 497.5H703M700.5 495V500" stroke="#0000ff"/><rect x="699" y="496" width="3" height="3" fill="#0000ff"/>
<path d="M708 501L713 506M708 506L713 501M708 503.5H713M710.5 501V506" stroke="#0000ff"/><rect x="709" y="502" width="3" height="3" fill="#0000ff"/>
<path d="M718 503L723 508M718 508L723 503M718 505.5H723M720.5 503V508" stroke="#0000ff"/><rect x="719" y="504" width="3" height="3" fill="#0000ff"/>
<path d="M728 517L733 522M728 522L733 517M728 519.5H733M730.5 517V522" stroke="#0000ff"/><rect x="729" y="518" width="3" height="3" fill="#0000ff"/>
<path d="M738 522L743 527M738 527L743 522M738 524.5H743M740.5 522V527" stroke="#0000ff"/><rect x="739" y="523" width="3" height="3" fill="#0000ff"/>
<path d="M708 476L713 481M708 481L713 476M708 478.5H713M710.5 476V481" stroke="#0000ff"/><rect x="709" y="477" width="3" height="3" fill="#0000ff"/>
<path d="M337 475L342 480M337 480L342 475" stroke="#000"/>
<path d="M347 527L352 532M347 532L352 527" stroke="#000"/>
<path d="M397 544L402 549M397 549L402 544" stroke="#000"/>
<path d="M478 486L483 491M478 491L483 486" stroke="#000"/>
<path d="M488 480L493 485M488 485L493 480" stroke="#000"/>
<path d="M568 493L573 498M568 498L573 493" stroke="#000"/>
<path d="M578 458L583 463M578 463L583 458" stroke="#000"/>
<path d="M598 420L603 425M598 425L603 420" stroke="#000"/>
<path d="M628 438L633 443M628 443L633 438" stroke="#000"/>
<path d="M688 447L693 452M688 452L693 447" stroke="#000"/>
<path d="M447 428L452 433M447 433L452 428" stroke="#000"/>
<path d="M528 389L533 394M528 394L533 389" stroke="#000"/>
<path d="M759 468L764 473M759 473L764 468" stroke="#000"/>
<rect x="247" y="173" width="5" height="5" fill="none" stroke="#ff00ff" stroke-width="2"/>
<rect x="257" y="180" width="5" height="5" fill="none" stroke="#ff00ff" stroke-width="2"/>
<rect x="267" y="191" width="5" height="5" fill="none" stroke="#ff00ff" stroke-width="2"/>
<rect x="277" y="199" width="5" height="5" fill="none" stroke="#ff00ff" stroke-width="2"/>
<rect x="287" y="206" width="5" height="5" fill="none" stroke="#ff00ff" stroke-width="2"/>
<rect x="297" y="215" width="5" height="5" fill="none" stroke="#ff00ff" stroke-width="2"/>
<rect x="307" y="226" width="5" height="5" fill="none" stroke="#ff00ff" stroke-width="2"/>
<rect x="317" y="231" width="5" height="5" fill="none" stroke="#ff00ff" stroke-width="2"/>
<rect x="327" y="243" width="5" height="5" fill="none" stroke="#ff00ff" stroke-width="2"/>
<rect x="337" y="254" width="5" height="5" fill="none" stroke="#ff00ff" stroke-width="2"/>
<rect x="347" y="259" width="5" height="5" fill="none" stroke="#ff00ff" stroke-width="2"/>
<rect x="357" y="269" width="5" height="5" fill="none" stroke="#ff00ff" stroke-width="2"/>
<rect x="367" y="277" width="5" height="5" fill="none" stroke="#ff00ff" stroke-width="2"/>
<rect x="377" y="279" width="5" height="5" fill="none" stroke="#ff00ff" stroke-width="2"/>
<rect x="387" y="281" width="5" height="5" fill="none" stroke="#ff00ff" stroke-width="2"/>
<rect x="397" y="288" width="5" height="5" fill="none" stroke="#ff00ff" stroke-width="2"/>
<rect x="407" y="297" width="5" height="5" fill="none" stroke="#ff00ff" stroke-width="2"/>
<rect x="417" y="301" width="5" height="5" fill="none" stroke="#ff00ff" stroke-width="2"/>
<rect x="427" y="303" width="5" height="5" fill="none" stroke="#ff00ff" stroke-width="2"/>
<rect x="437" y="303" width="5" height="5" fill="none" stroke="#ff00ff" stroke-width="2"/>
<rect x="447" y="313" width="5" height="5" fill="none" stroke="#ff00ff" stroke-width="2"/>
<rect x="457" y="324" width="5" height="5" fill="none" stroke="#ff00ff" stroke-width="2"/>
<rect x="468" y="334" width="5" height="5" fill="none" stroke="#ff00ff" stroke-width="2"/>
<rect x="478" y="337" width="5" height="5" fill="none" stroke="#ff00ff" stroke-width="2"/>
<rect x="488" y="335" width="5" height="5" fill="none" stroke="#ff00ff" stroke-width="2"/>
<rect x="498" y="341" width="5" height="5" fill="none" stroke="#ff00ff" stroke-width="2"/>
<rect x="508" y="348" width="5" height="5" fill="none" stroke="#ff00ff" stroke-width="2"/>
<rect x="518" y="355" width="5" height="5" fill="none" stroke="#ff00ff" stroke-width="2"/>
<rect x="528" y="361" width="5" height="5" fill="none" stroke="#ff00ff" stroke-width="2"/>
<rect x="538" y="364" width="5" height="5" fill="none" stroke="#ff00ff" stroke-width="2"/>
<rect x="548" y="383" width="5" height="5" fill="none" stroke="#ff00ff" stroke-width="2"/>
<rect x="558" y="388" width="5" height="5" fill="none" stroke="#ff00ff" stroke-width="2"/>
<rect x="568" y="404" width="5" height="5" fill="none" stroke="#ff00ff" stroke-width="2"/>
<rect x="578" y="409" width="5" height="5" fill="none" stroke="#ff00ff" stroke-width="2"/>
<rect x="588" y="418" width="5" height="5" fill="none" stroke="#ff00ff" stroke-width="2"/>
<rect x="598" y="430" width="5" height="5" fill="none" stroke="#ff00ff" stroke-width="2"/>
<rect x="608" y="441" width="5" height="5" fill="none" stroke="#ff00ff" stroke-width="2"/>
<rect x="618" y="449" width="5" height="5" fill="none" stroke="#ff00ff" stroke-width="2"/>
<rect x="628" y="458" width="5" height="5" fill="none" stroke="#ff00ff" stroke-width="2"/>
<rect x="638" y="460" width="5" height="5" fill="none" stroke="#ff00ff" stroke-width="2"/>
<rect x="648" y="469" width="5" height="5" fill="none" stroke="#ff00ff" stroke-width="2"/>
<rect x="658" y="472" width="5" height="5" fill="none" stroke="#ff00ff" stroke-width="2"/>
<rect x="668" y="477" width="5" height="5" fill="#0000ff" stroke="#ff00ff" stroke-width="2"/>
<rect x="678" y="482" width="5" height="5" fill="#0000ff" stroke="#ff00ff" stroke-width="2"/>
<rect x="688" y="483" width="5" height="5" fill="#0000ff" stroke="#ff00ff" stroke-width="2"/>
<rect x="698" y="495" width="5" height="5" fill="#0000ff" stroke="#ff00ff" stroke-width="2"/>
<rect x="708" y="501" width="5" height="5" fill="#0000ff" stroke="#ff00ff" stroke-width="2"/>
<rect x="718" y="503" width="5" height="5" fill="#0000ff" stroke="#ff00ff" stroke-width="2"/>
<rect x="728" y="517" width="5" height="5" fill="#0000ff" stroke="#ff00ff" stroke-width="2"/>
<rect x="738" y="522" width="5" height="5" fill="#0000ff" stroke="#ff00ff" stroke-width="2"/>
<rect x="748" y="525" width="5" height="5" fill="none" stroke="#ff00ff" stroke-width="2"/>
<rect x="759" y="529" width="5" height="5" fill="none" stroke="#ff00ff" stroke-width="2"/>
<rect x="239" y="569" width="5" height="5" fill="none" stroke="#000" stroke-width="2"/>
<rect x="247" y="564" width="5" height="5" fill="none" stroke="#000" stroke-width="2"/>
<rect x="257" y="554" width="5" height="5" fill="none" stroke="#000" stroke-width="2"/>
<rect x="267" y="548" width="5" height="5" fill="none" stroke="#000" stroke-width="2"/>
<rect x="277" y="541" width="5" height="5" fill="none" stroke="#000" stroke-width="2"/>
<rect x="287" y="535" width="5" height="5" fill="#0000ff" stroke="#000" stroke-width="2"/>
<rect x="297" y="527" width="5" height="5" fill="#0000ff" stroke="#000" stroke-width="2"/>
<rect x="307" y="527" width="5" height="5" fill="#0000ff" stroke="#000" stroke-width="2"/>
<rect x="317" y="520" width="5" height="5" fill="#0000ff" stroke="#000" stroke-width="2"/>
<rect x="327" y="503" width="5" height="5" fill="#0000ff" stroke="#000" stroke-width="2"/>
<rect x="337" y="505" width="5" height="5" fill="#0000ff" stroke="#000" stroke-width="2"/>
<rect x="347" y="496" width="5" height="5" fill="#0000ff" stroke="#000" stroke-width="2"/>
<rect x="357" y="491" width="5" height="5" fill="#0000ff" stroke="#000" stroke-width="2"/>
<rect x="367" y="486" width="5" height="5" fill="none" stroke="#000" stroke-width="2"/>
<rect x="377" y="474" width="5" height="5" fill="none" stroke="#000" stroke-width="2"/>
<rect x="387" y="467" width="5" height="5" fill="none" stroke="#000" stroke-width="2"/>
<rect x="397" y="462" width="5" height="5" fill="none" stroke="#000" stroke-width="2"/>
<rect x="407" y="453" width="5" height="5" fill="none" stroke="#000" stroke-width="2"/>
<rect x="417" y="442" width="5" height="5" fill="none" stroke="#000" stroke-width="2"/>
<rect x="427" y="434" width="5" height="5" fill="none" stroke="#000" stroke-width="2"/>
<rect x="437" y="427" width="5" height="5" fill="none" stroke="#000" stroke-width="2"/>
<rect x="447" y="416" width="5" height="5" fill="none" stroke="#000" stroke-width="2"/>
<rect x="457" y="404" width="5" height="5" fill="none" stroke="#000" stroke-width="2"/>
<rect x="468" y="404" width="5" height="5" fill="none" stroke="#000" stroke-width="2"/>
<rect x="478" y="400" width="5" height="5" fill="none" stroke="#000" stroke-width="2"/>
<rect x="488" y="388" width="5" height="5" fill="none" stroke="#000" stroke-width="2"/>
<rect x="498" y="380" width="5" height="5" fill="none" stroke="#000" stroke-width="2"/>
<rect x="508" y="369" width="5" height="5" fill="none" stroke="#000" stroke-width="2"/>
<rect x="518" y="360" width="5" height="5" fill="none" stroke="#000" stroke-width="2"/>
<rect x="528" y="356" width="5" height="5" fill="none" stroke="#000" stroke-width="2"/>
<rect x="538" y="350" width="5" height="5" fill="none" stroke="#000" stroke-width="2"/>
<rect x="548" y="350" width="5" height="5" fill="none" stroke="#000" stroke-width="2"/>
<rect x="558" y="335" width="5" height="5" fill="none" stroke="#000" stroke-width="2"/>
<rect x="568" y="334" width="5" height="5" fill="none" stroke="#000" stroke-width="2"/>
<rect x="578" y="329" width="5" height="5" fill="none" stroke="#000" stroke-width="2"/>
<rect x="588" y="321" width="5" height="5" fill="none" stroke="#000" stroke-width="2"/>
<rect x="598" y="319" width="5" height="5" fill="none" stroke="#000" stroke-width="2"/>
<rect x="608" y="314" width="5" height="5" fill="none" stroke="#000" stroke-width="2"/>
<rect x="618" y="296" width="5" height="5" fill="none" stroke="#000" stroke-width="2"/>
<rect x="628" y="289" width="5" height="5" fill="none" stroke="#000" stroke-width="2"/>
<rect x="638" y="282" width="5" height="5" fill="none" stroke="#000" stroke-width="2"/>
<rect x="648" y="279" width="5" height="5" fill="none" stroke="#000" stroke-width="2"/>
<rect x="658" y="266" width="5" height="5" fill="none" stroke="#000" stroke-width="2"/>
<rect x="668" y="255" width="5" height="5" fill="none" stroke="#000" stroke-width="2"/>
<rect x="678" y="246" width="5" height="5" fill="none" stroke="#000" stroke-width="2"/>
<rect x="688" y="239" width="5" height="5" fill="none" stroke="#000" stroke-width="2"/>
<rect x="698" y="230" width="5" height="5" fill="none" stroke="#000" stroke-width="2"/>
<rect x="708" y="220" width="5" height="5" fill="none" stroke="#000" stroke-width="2"/>
<rect x="718" y="215" width="5" height="5" fill="none" stroke="#000" stroke-width="2"/>
<rect x="728" y="207" width="5" height="5" fill="none" stroke="#000" stroke-width="2"/>
<rect x="738" y="202" width="5" height="5" fill="none" stroke="#000" stroke-width="2"/>
<rect x="748" y="193" width="5" height="5" fill="none" stroke="#000" stroke-width="2"/>
<rect x="759" y="186" width="5" height="5" fill="none" stroke="#000" stroke-width="2"/>
<rect x="184" y="633" width="7" height="11" fill="#fff"/>
<rect x="241" y="633" width="7" height="11" fill="#fff"/>
<rect x="299" y="633" width="7" height="11" fill="#fff"/>
<rect x="357" y="633" width="7" height="11" fill="#fff"/>
<rect x="419" y="624" width="7" height="11" fill="#fff"/>
<rect x="472" y="633" width="7" height="11" fill="#fff"/>
<rect x="530" y="633" width="7" height="11" fill="#fff"/>
<rect x="587" y="633" width="7" height="11" fill="#fff"/>
<rect x="645" y="633" width="7" height="11" fill="#fff"/>
<rect x="703" y="633" width="12" height="11" fill="#fff"/>
<rect x="761" y="633" width="12" height="11" fill="#fff"/>
<rect x="818" y="633" width="12" height="11" fill="#fff"/>
<rect x="876" y="633" width="12" height="11" fill="#fff"/>
<path d="M55.5 120V634 M53 631.5H58 M54 618.5H56 M54 606.5H56 M54 593.5H56 M54 580.5H56 M53 568.5H58 M54 555.5H56 M54 543.5H56 M54 530.5H56 M54 518.5H56 M53 505.5H58 M54 492.5H56 M54 480.5H56 M54 467.5H56 M54 455.5H56 M53 442.5H58 M54 430.5H56 M54 417.5H56 M54 404.5H56 M54 392.5H56 M53 379.5H58 M54 367.5H56 M54 354.5H56 M54 342.5H56 M54 329.5H56 M53 317.5H58 M54 304.5H56 M54 291.5H56 M54 279.5H56 M54 266.5H56 M53 254.5H58 M54 241.5H56 M54 229.5H56 M54 216.5H56 M54 203.5H56 M53 191.5H58 M54 178.5H56 M54 166.5H56 M54 153.5H56 M54 141.5H56 M53 128.5H58 M60 639.5H884 M68.5 637V642 M118.5 638V640 M168.5 638V640 M219.5 638V640 M269.5 638V640 M319.5 637V642 M369.5 638V640 M419.5 638V640 M470.5 638V640 M520.5 638V640 M570.5 637V642 M620.5 638V640 M670.5 638V640 M720.5 638V640 M771.5 638V640 M821.5 637V642 M871.5 638V640" stroke="#000"/>
</g>
<g clip-path="url(#cc)" font-family="Liberation Sans, sans-serif" fill="#000">
<text transform="translate(49,635.2) scale(0.74,1)" text-anchor="end" font-size="14">0</text>
<text transform="translate(49,572.4) scale(0.74,1)" text-anchor="end" font-size="14">10</text>
<text transform="translate(49,509.5) scale(0.74,1)" text-anchor="end" font-size="14">20</text>
<text transform="translate(49,446.7) scale(0.74,1)" text-anchor="end" font-size="14">30</text>
<text transform="translate(49,383.8) scale(0.74,1)" text-anchor="end" font-size="14">40</text>
<text transform="translate(49,321) scale(0.74,1)" text-anchor="end" font-size="14">50</text>
<text transform="translate(49,258.2) scale(0.74,1)" text-anchor="end" font-size="14">60</text>
<text transform="translate(49,195.3) scale(0.74,1)" text-anchor="end" font-size="14">70</text>
<text transform="translate(49,132.5) scale(0.74,1)" text-anchor="end" font-size="14">80</text>
<text transform="translate(67.9,654) scale(0.74,1)" text-anchor="middle" font-size="14">0</text>
<text transform="translate(318.8,654) scale(0.74,1)" text-anchor="middle" font-size="14">100</text>
<text transform="translate(569.6,654) scale(0.74,1)" text-anchor="middle" font-size="14">200</text>
<text transform="translate(820.5,654) scale(0.74,1)" text-anchor="middle" font-size="14">300</text>
<text transform="translate(184.2,643.8) scale(0.74,1)" font-size="14">1</text>
<text transform="translate(241.9,643.8) scale(0.74,1)" font-size="14">2</text>
<text transform="translate(299.6,643.8) scale(0.74,1)" font-size="14">3</text>
<text transform="translate(357.3,643.8) scale(0.74,1)" font-size="14">4</text>
<text transform="translate(419.7,634.3) scale(0.74,1)" font-size="14">5</text>
<text transform="translate(472.7,643.8) scale(0.74,1)" font-size="14">6</text>
<text transform="translate(530.4,643.8) scale(0.74,1)" font-size="14">7</text>
<text transform="translate(588.1,643.8) scale(0.74,1)" font-size="14">8</text>
<text transform="translate(645.8,643.8) scale(0.74,1)" font-size="14">9</text>
<text transform="translate(703.5,643.8) scale(0.74,1)" font-size="14">10</text>
<text transform="translate(761.2,643.8) scale(0.74,1)" font-size="14">11</text>
<text transform="translate(818.9,643.8) scale(0.74,1)" font-size="14">12</text>
<text transform="translate(876.6,643.8) scale(0.74,1)" font-size="14">13</text>
<text x="440" y="672" font-size="12.2">distance [m]</text>
<text transform="translate(20.3,404) rotate(-90)" font-size="12.6">time [ms]</text>
<rect x="238" y="172" width="7" height="2" fill="#ff00ff"/>
<rect x="60" y="142" width="194" height="31" fill="#fff"/><rect x="60" y="173" width="117" height="15" fill="#fff"/>
<text x="60.3" y="154" font-size="12.8">max. forward traveltime: 70,49422</text>
<text x="60.3" y="169.5" font-size="12.8">max. reverse traveltime: 73,39211</text>
<text x="60.3" y="185" font-size="12.8">difference: 2,897888</text>
</g></svg>
</body></html>
